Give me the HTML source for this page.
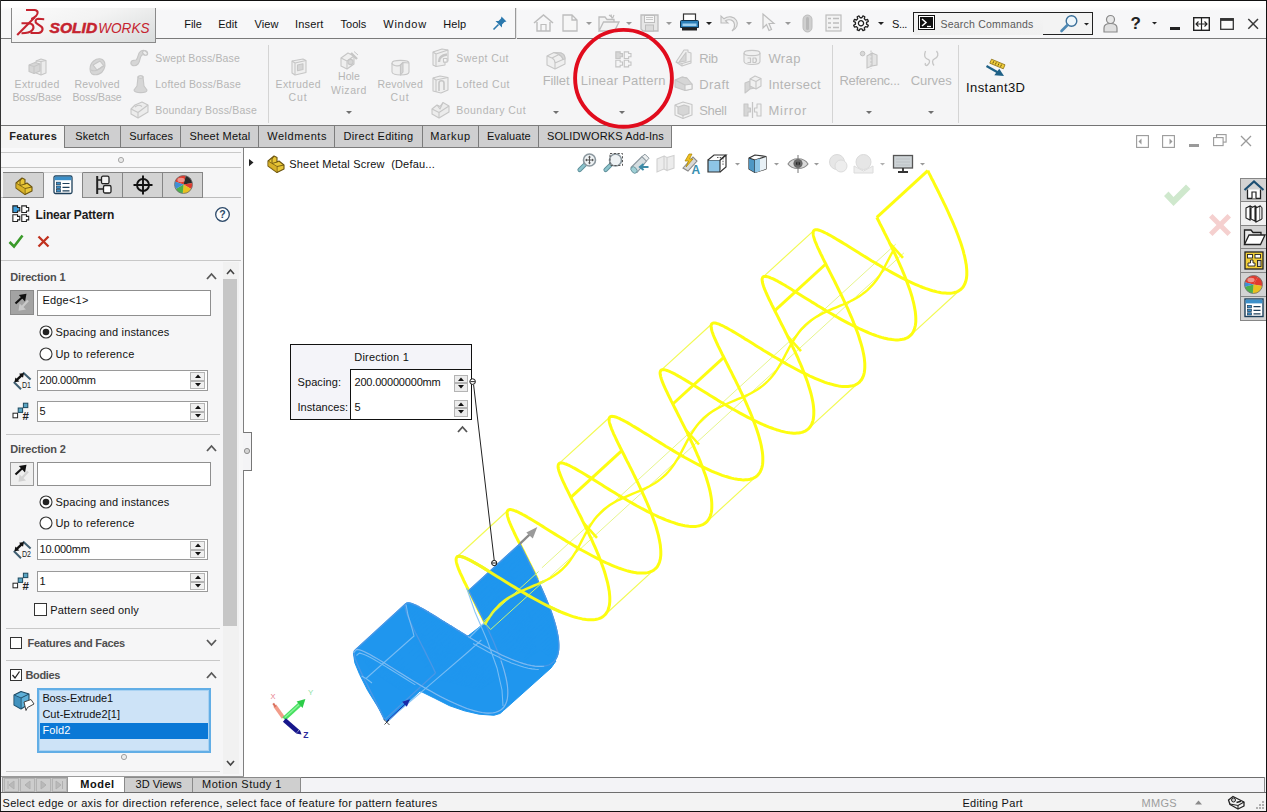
<!DOCTYPE html>
<html lang="en"><head><meta charset="utf-8"><title>SOLIDWORKS - Linear Pattern</title>
<style>
html,body{margin:0;padding:0;background:#fff;}
body{width:1267px;height:812px;position:relative;overflow:hidden;font-family:"Liberation Sans", sans-serif;font-size:12px;}
#app{position:absolute;left:0;top:0;width:1267px;height:812px;overflow:hidden;background:#fff;}
#app div,#app span,#app svg{position:absolute;box-sizing:border-box;}
#app span{white-space:pre;}
#app svg{overflow:visible;}
#app svg text{font-family:"Liberation Sans", sans-serif;}
</style></head><body><div id="app">
<div style="left:0px;top:0px;width:1267px;height:812px;background:#fff"></div>
<div style="left:0px;top:0px;width:1267px;height:39px;background:#f7f7f8"></div>
<div style="left:0px;top:0px;width:1267px;height:11px;background:linear-gradient(#fff 0,#fff 55%,#f7f7f8 100%)"></div>
<div style="left:0px;top:39px;width:1267px;height:87px;background:#f5f5f6"></div>
<div style="left:0px;top:38px;width:1267px;height:1px;background:#7a7a7a"></div>
<div style="left:0px;top:125px;width:1267px;height:1px;background:#747474"></div>
<div style="left:0px;top:126px;width:672px;height:22px;background:#f5f5f6"></div>
<div style="left:0px;top:147px;width:1267px;height:1px;background:#747474"></div>
<div style="left:671px;top:126px;width:600px;height:22px;background:#fff"></div>
<div style="left:671px;top:147px;width:600px;height:1px;background:#fff"></div>
<div style="left:11px;top:8px;width:145px;height:35px;background:linear-gradient(160deg,#fbfbfb 0%,#f3f3f3 45%,#d9dcdc 100%);border:1px solid #8a8a8a;border-top:none"></div>
<svg style="left:0px;top:0px;" width="160" height="46" viewBox="0 0 160 46">
<g fill="none" stroke="#c5232f" stroke-width="2.1" stroke-linecap="butt" stroke-linejoin="round">
<path d="M26,10 L34.5,10 C38.5,10.2 38.3,13.8 36,16 C34.5,17.5 33,18.6 31.2,19"/>
<path d="M34.5,17.5 L17.2,35"/>
<path d="M21.5,23.3 L28.5,23.3 C33.5,23.5 34.8,27.5 32,30.5 C29.5,33.2 26,33.2 21.5,33.2"/>
<path d="M44.2,19.2 L38.2,18.8 C35.2,19 34.6,22 37,23.6 L41.3,26.6 C43.6,28.6 42.6,32.6 38.5,33 L30.5,33"/>
</g>
<text x="49.6" y="32.9" font-size="14.2" font-weight="700" font-style="italic" fill="#c5232f" stroke="#c5232f" stroke-width=".5" textLength="47.6" lengthAdjust="spacingAndGlyphs">SOLID</text>
<text x="98.2" y="32.9" font-size="14.2" font-weight="400" font-style="italic" fill="#c5232f" textLength="51.4" lengthAdjust="spacingAndGlyphs">WORKS</text>
</svg>
<span style="left:184.3px;top:18.6px;font-size:11px;line-height:11px;font-weight:400;color:#111;letter-spacing:-0.06px">File</span>
<span style="left:218.2px;top:18.6px;font-size:11px;line-height:11px;font-weight:400;color:#111;letter-spacing:0.06px">Edit</span>
<span style="left:254.5px;top:18.6px;font-size:11px;line-height:11px;font-weight:400;color:#111;letter-spacing:0.09px">View</span>
<span style="left:295.0px;top:18.6px;font-size:11px;line-height:11px;font-weight:400;color:#111;letter-spacing:0.16px">Insert</span>
<span style="left:340.4px;top:18.6px;font-size:11px;line-height:11px;font-weight:400;color:#111;letter-spacing:0.06px">Tools</span>
<span style="left:383.3px;top:18.6px;font-size:11px;line-height:11px;font-weight:400;color:#111;letter-spacing:0.73px">Window</span>
<span style="left:443.2px;top:18.6px;font-size:11px;line-height:11px;font-weight:400;color:#111;letter-spacing:0.09px">Help</span>
<svg style="left:492px;top:15px;" width="16" height="16" viewBox="0 0 16 16"><path d="M9.5,1.5 L14.5,6.5 L12.5,7 L10,9.5 L10,12.5 L3.5,6 L6.5,6 L9,3.5 Z" fill="#2b78ad"/><path d="M6.5,9.5 L1.5,14.5" stroke="#2b78ad" stroke-width="1.6"/></svg>
<div style="left:515px;top:8px;width:1px;height:31px;background:#9a9a9a"></div>
<div style="left:516px;top:8px;width:1px;height:31px;background:#e4e4e4"></div>
<svg style="left:533px;top:14px;" width="21" height="18" viewBox="0 0 21 18"><path d="M1,9 L10.5,1 L20,9" fill="none" stroke="#bdbdbd" stroke-width="1.6"/><path d="M4,8 V17 H17 V8" fill="none" stroke="#bdbdbd" stroke-width="1.4"/><path d="M8,17 V10.5 H13 V17" fill="none" stroke="#bdbdbd" stroke-width="1.2"/></svg>
<svg style="left:562px;top:14px;" width="16" height="18" viewBox="0 0 16 18"><path d="M1,1 H10 L15,6 V17 H1 Z M10,1 V6 H15" fill="#f6f6f6" stroke="#bdbdbd" stroke-width="1.3"/></svg>
<svg style="left:585.5px;top:21.5px;" width="6" height="4" viewBox="0 0 6 4"><path d="M0,0 L6,0 L3,3 Z" fill="#9a9a9a"/></svg>
<svg style="left:598px;top:14px;" width="22" height="18" viewBox="0 0 22 18"><path d="M1,17 V3 H7 L9,5.5 H16 V8 M1,17 L5.5,8 H21 L16.5,17 Z" fill="#f3f3f3" stroke="#bdbdbd" stroke-width="1.3"/><path d="M11,1 L15,4 M13,0.5 L14,4.5 M16,1 L14.5,4.5" stroke="#bdbdbd" stroke-width="1.1"/></svg>
<svg style="left:625.5px;top:21.5px;" width="6" height="4" viewBox="0 0 6 4"><path d="M0,0 L6,0 L3,3 Z" fill="#9a9a9a"/></svg>
<svg style="left:640px;top:14px;" width="19" height="18" viewBox="0 0 19 18"><path d="M1,1 H18 V17 H3 L1,15 Z" fill="#e6e6e6" stroke="#bdbdbd" stroke-width="1.3"/><rect x="4.5" y="1.5" width="10" height="7" fill="#f6f6f6" stroke="#bdbdbd" stroke-width="1"/><rect x="5.5" y="11" width="8" height="6" fill="#dadada" stroke="#bdbdbd" stroke-width="1"/><path d="M6,3.5 H13 M6,5.5 H13" stroke="#bdbdbd" stroke-width=".8"/></svg>
<svg style="left:665.5px;top:21.5px;" width="6" height="4" viewBox="0 0 6 4"><path d="M0,0 L6,0 L3,3 Z" fill="#9a9a9a"/></svg>
<svg style="left:679px;top:13px;" width="21" height="19" viewBox="0 0 21 19"><rect x="4.5" y="1" width="12" height="8" fill="#fff" stroke="#333" stroke-width="1.2"/><path d="M1.5,8.5 Q1.5,7.5 2.5,7.5 H18.5 Q19.5,7.5 19.5,8.5 V14.5 H1.5 Z" fill="#2b7fb8" stroke="#12344d" stroke-width="1"/><rect x="3.5" y="10.5" width="14" height="2.6" fill="#9fd0ee"/><rect x="3" y="14.5" width="15" height="3" fill="#222"/></svg>
<svg style="left:705.5px;top:21.5px;" width="6" height="4" viewBox="0 0 6 4"><path d="M0,0 L6,0 L3,3 Z" fill="#222"/></svg>
<svg style="left:719px;top:14px;" width="20" height="18" viewBox="0 0 20 18"><path d="M2,2 V9 H9 L6.5,6.8 C10,4.5 15,6 15.5,10.5 C15.8,13 15,15 13,17 C18,14.5 19.5,10 17.5,6.5 C15,2.5 9.5,1.5 5,4.8 Z" fill="#ececec" stroke="#bdbdbd" stroke-width="1.1"/></svg>
<svg style="left:745.5px;top:21.5px;" width="6" height="4" viewBox="0 0 6 4"><path d="M0,0 L6,0 L3,3 Z" fill="#9a9a9a"/></svg>
<svg style="left:761px;top:13px;" width="16" height="20" viewBox="0 0 16 20"><path d="M2,1 L2,15 L5.5,11.5 L8,17.5 L10.5,16.5 L8,10.5 L13,10.5 Z" fill="#f4f4f4" stroke="#bdbdbd" stroke-width="1.2"/></svg>
<svg style="left:784.5px;top:21.5px;" width="6" height="4" viewBox="0 0 6 4"><path d="M0,0 L6,0 L3,3 Z" fill="#9a9a9a"/></svg>
<svg style="left:802px;top:14px;" width="11" height="19" viewBox="0 0 11 19"><rect x="1" y="1" width="9" height="17" rx="4.5" fill="#cfcfcf" stroke="#bdbdbd" stroke-width="1"/><rect x="4" y="3" width="3" height="13" rx="1.5" fill="#b8b8b8"/></svg>
<svg style="left:825px;top:14px;" width="17" height="18" viewBox="0 0 17 18"><rect x="1" y="1" width="15" height="16" fill="#f3f3f3" stroke="#bdbdbd" stroke-width="1.2"/><path d="M3,4.5 H6 M3,9 H6 M3,13.5 H6 M8,4.5 H14 M8,9 H14 M8,13.5 H14" stroke="#bdbdbd" stroke-width="1.3"/></svg>
<svg style="left:852px;top:14px;" width="18" height="18" viewBox="0 0 18 18"><g transform="translate(9,9.3) rotate(22.5)"><path d="M5.45,-1.31 L7.53,-1.01 L7.53,1.01 L5.45,1.31 L4.77,2.93 L6.04,4.61 L4.61,6.04 L2.93,4.77 L1.31,5.45 L1.01,7.53 L-1.01,7.53 L-1.31,5.45 L-2.93,4.77 L-4.61,6.04 L-6.04,4.61 L-4.77,2.93 L-5.45,1.31 L-7.53,1.01 L-7.53,-1.01 L-5.45,-1.31 L-4.77,-2.93 L-6.04,-4.61 L-4.61,-6.04 L-2.93,-4.77 L-1.31,-5.45 L-1.01,-7.53 L1.01,-7.53 L1.31,-5.45 L2.93,-4.77 L4.61,-6.04 L6.04,-4.61 L4.77,-2.93 Z" fill="#fcfcfc" stroke="#222" stroke-width="1.3" stroke-linejoin="round"/><circle r="2.6" fill="none" stroke="#222" stroke-width="1.3"/></g></svg>
<svg style="left:877.5px;top:21.5px;" width="6" height="4" viewBox="0 0 6 4"><path d="M0,0 L6,0 L3,3 Z" fill="#222"/></svg>
<span style="left:892.0px;top:18.6px;font-size:11px;line-height:11px;font-weight:400;color:#111;letter-spacing:-0.38px">S...</span>
<div style="left:913px;top:12px;width:180px;height:23px;background:#fff;border:1px solid #222;"></div>
<div style="left:913px;top:13px;width:130px;height:22px;background:linear-gradient(#f4f4f4,#f0f0f0);border:none"></div>
<div style="left:913px;top:12px;width:130px;height:1px;background:#222"></div>
<div style="left:913px;top:12px;width:1px;height:20px;background:#222"></div>
<div style="left:1043px;top:13px;width:49px;height:21px;background:#f3f3f3"></div>
<svg style="left:918px;top:15px;" width="17" height="15" viewBox="0 0 17 15"><rect x="0.5" y="0.5" width="16" height="14" fill="#fff" stroke="#111" stroke-width="1"/><rect x="2" y="2" width="13" height="11" fill="#111"/><path d="M4,4 L8,7.5 L4,11" fill="none" stroke="#fff" stroke-width="1.5"/><path d="M9,11.5 H13" stroke="#fff" stroke-width="1.3"/></svg>
<span style="left:940.5px;top:19.1px;font-size:10.5px;line-height:10.5px;font-weight:400;color:#5a5a5a;letter-spacing:0.21px">Search Commands</span>
<svg style="left:1060px;top:14px;" width="19" height="19" viewBox="0 0 19 19"><circle cx="11.5" cy="7" r="5.3" fill="#eef6fb" stroke="#3a6f99" stroke-width="1.4"/><path d="M7.5,11 L1.5,17" stroke="#4e88b3" stroke-width="2.6" stroke-linecap="round"/></svg>
<svg style="left:1083.5px;top:23.25px;" width="5.0" height="3.5" viewBox="0 0 5.0 3.5"><path d="M0,0 L5.0,0 L2.5,2.5 Z" fill="#222"/></svg>
<svg style="left:1103px;top:14px;" width="15" height="19" viewBox="0 0 15 19"><circle cx="7.5" cy="5.5" r="4" fill="#e8e8e8" stroke="#8a8a8a" stroke-width="1.2"/><path d="M1,18 V14 C1,10.5 4,9.5 7.5,9.5 C11,9.5 14,10.5 14,14 V18 Z" fill="#e0e0e0" stroke="#8a8a8a" stroke-width="1.2"/></svg>
<span style="left:1130.5px;top:15.2px;font-size:17px;line-height:17px;font-weight:700;color:#222;letter-spacing:-0.39px">?</span>
<svg style="left:1152.0px;top:21.75px;" width="5.0" height="3.5" viewBox="0 0 5.0 3.5"><path d="M0,0 L5.0,0 L2.5,2.5 Z" fill="#222"/></svg>
<div style="left:1170px;top:27px;width:10px;height:3px;background:#222"></div>
<svg style="left:1193px;top:17px;" width="17" height="14" viewBox="0 0 17 14"><rect x="0.7" y="0.7" width="15.6" height="12.6" fill="#fff" stroke="#222" stroke-width="1.4"/><path d="M8.5,1 V13" stroke="#222" stroke-width="1.2"/><path d="M3,7 H14 M5.5,4.5 L3,7 L5.5,9.5 M11.5,4.5 L14,7 L11.5,9.5" fill="none" stroke="#222" stroke-width="1.1"/></svg>
<svg style="left:1220px;top:18px;" width="14" height="12" viewBox="0 0 14 12"><rect x="0.7" y="0.7" width="12.6" height="10.6" fill="#fafafa" stroke="#333" stroke-width="1.3"/><rect x="0.7" y="0.7" width="12.6" height="2.2" fill="#333"/></svg>
<svg style="left:1247px;top:18px;" width="12" height="12" viewBox="0 0 12 12"><path d="M1.3,1 L11,10.8 M11,1 L1.3,10.8" stroke="#3a3a3a" stroke-width="1.5"/></svg>
<svg style="left:28px;top:57.5px;" width="19" height="18" viewBox="0 0 19 18"><g fill="#e3e3e3" stroke="#c6c6c6" stroke-width="1.1" stroke-linejoin="round"><path d="M8,3 L13,1 L18,2.5 V15 L13,17 L8,15 Z" fill="#ececec"/><path d="M13,3.5 V17 M8,3 L13,3.5 L18,2.5" fill="none"/><path d="M1,7 L7,4.5 L12,6 V13 L6,15.5 L1,13.5 Z" fill="#d6d6d6"/><path d="M1,7 L6,8.5 L12,6 M6,8.5 V15.5" fill="none"/></g></svg>
<span style="left:14.5px;top:79.1px;font-size:10.5px;line-height:10.5px;font-weight:400;color:#b5b5b5;letter-spacing:0.40px">Extruded</span>
<span style="left:12.5px;top:91.9px;font-size:10.5px;line-height:10.5px;font-weight:400;color:#b5b5b5;letter-spacing:-0.13px">Boss/Base</span>
<svg style="left:88px;top:56.5px;" width="19" height="20" viewBox="0 0 19 20"><g fill="#e3e3e3" stroke="#c6c6c6" stroke-width="1.1" stroke-linejoin="round"><path d="M2,12 C2,5 8,1 13,2 C17,3 18,8 16,12 C14,17 8,19 4,17 C2.5,16 2,14 2,12 Z" fill="#d6d6d6"/><path d="M5,8 L12,4 L16,9 L9,13 Z" fill="#efefef"/><path d="M3,13 C6,15 11,13 15,9" fill="none"/></g></svg>
<span style="left:74.5px;top:79.1px;font-size:10.5px;line-height:10.5px;font-weight:400;color:#b5b5b5;letter-spacing:0.19px">Revolved</span>
<span style="left:72.5px;top:91.9px;font-size:10.5px;line-height:10.5px;font-weight:400;color:#b5b5b5;letter-spacing:-0.13px">Boss/Base</span>
<svg style="left:129px;top:48.5px;" width="20" height="19" viewBox="0 0 20 19"><g fill="#e3e3e3" stroke="#c6c6c6" stroke-width="1.1" stroke-linejoin="round"><path d="M2,13 C1,17 6,18 9,15 C12,12 10,8 13,6 C15,5 17,7 18.5,5.5 C19.5,2 15,0.5 12,2 C8,4 10,9 7,11 C5,12 3,10.5 2,13 Z" fill="#d6d6d6"/><ellipse cx="16" cy="4" rx="2.6" ry="1.8" fill="#efefef" transform="rotate(35 16 4)"/></g></svg>
<span style="left:155.3px;top:53.4px;font-size:10.5px;line-height:10.5px;font-weight:400;color:#b5b5b5;letter-spacing:0.16px">Swept Boss/Base</span>
<svg style="left:132.5px;top:75px;" width="15" height="19" viewBox="0 0 15 19"><g fill="#e3e3e3" stroke="#c6c6c6" stroke-width="1.1" stroke-linejoin="round"><path d="M5,2 C5,0.5 10,0.5 10,2 L11,11 L14,15 C14,18.5 1,18.5 1,15 L4,11 Z" fill="#d6d6d6"/><ellipse cx="7.5" cy="2" rx="2.5" ry="1.1" fill="#f2f2f2"/></g></svg>
<span style="left:155.3px;top:79.1px;font-size:10.5px;line-height:10.5px;font-weight:400;color:#b5b5b5;letter-spacing:0.21px">Lofted Boss/Base</span>
<svg style="left:129.5px;top:100.7px;" width="19" height="18" viewBox="0 0 19 18"><g fill="#e3e3e3" stroke="#c6c6c6" stroke-width="1.1" stroke-linejoin="round"><path d="M1,8 L5,4 L12,1 L18,4 V11 L8,17 L1,13 Z" fill="#ececec"/><path d="M1,8 L8,11.5 L18,4 M8,11.5 V17" fill="none"/><path d="M5,6 C7,4 10,4 12,5.5" fill="none"/></g></svg>
<span style="left:155.3px;top:104.9px;font-size:10.5px;line-height:10.5px;font-weight:400;color:#b5b5b5;letter-spacing:0.20px">Boundary Boss/Base</span>
<div style="left:268px;top:45px;width:1px;height:78px;background:#d4d4d4"></div>
<svg style="left:290.5px;top:58px;" width="16" height="18" viewBox="0 0 16 18"><g fill="#e3e3e3" stroke="#c6c6c6" stroke-width="1.1" stroke-linejoin="round"><path d="M1,3 L12,1 L15,2.5 V14.5 L4,17 L1,15 Z" fill="#efefef"/><path d="M4,5 L15,2.5 M4,5 V17 M1,3 L4,5" fill="none"/><path d="M6.5,7 L12,5.8 V11.5 L6.5,12.8 Z" fill="#d6d6d6"/></g></svg>
<span style="left:275.5px;top:79.1px;font-size:10.5px;line-height:10.5px;font-weight:400;color:#b5b5b5;letter-spacing:0.43px">Extruded</span>
<span style="left:288.5px;top:91.9px;font-size:10.5px;line-height:10.5px;font-weight:400;color:#b5b5b5;letter-spacing:0.89px">Cut</span>
<svg style="left:339.5px;top:51px;" width="19" height="19" viewBox="0 0 19 19"><g fill="#e3e3e3" stroke="#c6c6c6" stroke-width="1.1" stroke-linejoin="round"><path d="M1,7 L8,2 L14,5 V13 L7,18 L1,15 Z" fill="#efefef"/><path d="M1,7 L7,10 L14,5 M7,10 V18" fill="none"/><circle cx="10.5" cy="11" r="2.6" fill="#d6d6d6"/><path d="M11,2 L17,8" stroke-width="2.4"/><path d="M14,0.5 L18,4" stroke-width="1"/></g></svg>
<span style="left:338.0px;top:71.4px;font-size:10.5px;line-height:10.5px;font-weight:400;color:#b5b5b5;letter-spacing:0.10px">Hole</span>
<span style="left:331.0px;top:84.9px;font-size:10.5px;line-height:10.5px;font-weight:400;color:#b5b5b5;letter-spacing:0.55px">Wizard</span>
<svg style="left:345.5px;top:110.8px;" width="6" height="4" viewBox="0 0 6 4"><path d="M0,0 L6,0 L3,3 Z" fill="#707070"/></svg>
<svg style="left:390.5px;top:57.5px;" width="19" height="19" viewBox="0 0 19 19"><g fill="#e3e3e3" stroke="#c6c6c6" stroke-width="1.1" stroke-linejoin="round"><path d="M1,5 C1,1.5 18,1.5 18,5 V14 C18,18 1,18 1,14 Z" fill="#efefef"/><path d="M1,5 C1,8 8,8.5 9.5,7 L12,4.5 M9.5,7 V17 M12,4.5 C15,4.8 18,5 18,5" fill="none"/><path d="M9.5,7 L12,4.5 V14 L9.5,17 Z" fill="#d6d6d6"/></g></svg>
<span style="left:377.5px;top:79.1px;font-size:10.5px;line-height:10.5px;font-weight:400;color:#b5b5b5;letter-spacing:0.21px">Revolved</span>
<span style="left:390.5px;top:91.9px;font-size:10.5px;line-height:10.5px;font-weight:400;color:#b5b5b5;letter-spacing:0.89px">Cut</span>
<svg style="left:431.5px;top:48.3px;" width="17" height="19" viewBox="0 0 17 19"><g fill="#e3e3e3" stroke="#c6c6c6" stroke-width="1.1" stroke-linejoin="round"><path d="M1,4 L10,1 L16,2 V13 L13,14 V17 L4,18.5 L1,17 Z" fill="#efefef"/><path d="M4,6 L16,2 M4,6 V18.5 M1,4 L4,6" fill="none"/><path d="M7,14 C7,9 10,7 15,6.5" fill="none" stroke-width="2.4"/><rect x="11.5" y="10.5" width="3.6" height="3.6" fill="#f6f6f6"/></g></svg>
<span style="left:456.3px;top:53.4px;font-size:10.5px;line-height:10.5px;font-weight:400;color:#b5b5b5;letter-spacing:0.47px">Swept Cut</span>
<svg style="left:431.5px;top:74.8px;" width="17" height="19" viewBox="0 0 17 19"><g fill="#e3e3e3" stroke="#c6c6c6" stroke-width="1.1" stroke-linejoin="round"><path d="M1,3 L8,1 L16,2.5 V15 L9,18 L1,16 Z" fill="#efefef"/><path d="M4,5 L16,2.5 M4,5 V17 M1,3 L4,5" fill="none"/><path d="M7,16 V8 C7,5 12,5 12,8 V15" fill="none" stroke-width="1.6"/></g></svg>
<span style="left:456.3px;top:79.1px;font-size:10.5px;line-height:10.5px;font-weight:400;color:#b5b5b5;letter-spacing:0.52px">Lofted Cut</span>
<svg style="left:430.5px;top:101px;" width="19" height="18" viewBox="0 0 19 18"><g fill="#e3e3e3" stroke="#c6c6c6" stroke-width="1.1" stroke-linejoin="round"><path d="M1,8 L6,4 L9,5.5 L12,1.5 L18,5 V11 L8,17 L1,13 Z" fill="#ececec"/><path d="M1,8 L8,11.5 L18,5 M8,11.5 V17 M6,4 L9,8 L12,1.5" fill="none"/></g></svg>
<span style="left:456.3px;top:104.9px;font-size:10.5px;line-height:10.5px;font-weight:400;color:#b5b5b5;letter-spacing:0.46px">Boundary Cut</span>
<svg style="left:546px;top:50.5px;" width="20" height="19" viewBox="0 0 20 19"><g fill="#e3e3e3" stroke="#c6c6c6" stroke-width="1.1" stroke-linejoin="round"><path d="M1,5 L8,1.5 L15,2 C18,3 19,5 19,8 V13 L9,18 L1,14 Z" fill="#efefef"/><path d="M1,5 L6,7 C8,8 9,9.5 9,12 V18 M6,7 L13,3.5 C15,4.5 16.5,6 17,8.5 L9,12" fill="none"/><path d="M8,1.5 L15,2 C18,3 19,5 19,8 L17,8.5 C16.5,6 15,4.5 13,3.5 Z" fill="#d6d6d6"/></g></svg>
<span style="left:542.7px;top:73.9px;font-size:13px;line-height:13px;font-weight:400;color:#b5b5b5;letter-spacing:-0.11px">Fillet</span>
<svg style="left:552.5px;top:110.8px;" width="6" height="4" viewBox="0 0 6 4"><path d="M0,0 L6,0 L3,3 Z" fill="#707070"/></svg>
<svg style="left:615px;top:51px;" width="16.5" height="16.5" viewBox="0 0 16.5 16.5"><path d="M0.83,0.83 h4.33 v1.65 h2.37 v3.30 h-2.37 v1.65 h-4.33 Z" fill="#d6d6d6" stroke="#c4c4c4" stroke-width="1.1"/><path d="M9.28,0.83 h4.33 v1.65 h2.37 v3.30 h-2.37 v1.65 h-4.33 Z" fill="none" stroke="#c4c4c4" stroke-width="1.1"/><path d="M0.83,9.28 h4.33 v1.65 h2.37 v3.30 h-2.37 v1.65 h-4.33 Z" fill="none" stroke="#c4c4c4" stroke-width="1.1"/><path d="M9.28,9.28 h4.33 v1.65 h2.37 v3.30 h-2.37 v1.65 h-4.33 Z" fill="none" stroke="#c4c4c4" stroke-width="1.1"/></svg>
<span style="left:580.8px;top:73.9px;font-size:13px;line-height:13px;font-weight:400;color:#b5b5b5;letter-spacing:0.23px">Linear Pattern</span>
<svg style="left:619.3px;top:110.8px;" width="6" height="4" viewBox="0 0 6 4"><path d="M0,0 L6,0 L3,3 Z" fill="#707070"/></svg>
<svg style="left:675px;top:49px;" width="17" height="18" viewBox="0 0 17 18"><g fill="#e3e3e3" stroke="#c6c6c6" stroke-width="1.1" stroke-linejoin="round"><path d="M1,13 L9,1 L13,1 L13,3 L16,4 V14 L7,17 Z" fill="#efefef"/><path d="M4,13 L11,3.5 V12 Z" fill="#d6d6d6"/><path d="M1,13 L7,14.5 L16,12 M7,14.5 V17" fill="none"/></g></svg>
<span style="left:699.2px;top:52.1px;font-size:13px;line-height:13px;font-weight:400;color:#b5b5b5;letter-spacing:-0.34px">Rib</span>
<svg style="left:674px;top:76px;" width="19" height="15" viewBox="0 0 19 15"><g fill="#e3e3e3" stroke="#c6c6c6" stroke-width="1.1" stroke-linejoin="round"><path d="M1,4 L8,1 L13,2 L18,8 V13 L11,14.5 L1,11 Z" fill="#d6d6d6"/><path d="M11,9 L18,8 V13 L11,14.5 Z" fill="#f4f4f4"/><path d="M1,4 L11,9 M8,1 L13,2" fill="none"/></g></svg>
<span style="left:699.2px;top:77.8px;font-size:13px;line-height:13px;font-weight:400;color:#b5b5b5;letter-spacing:0.43px">Draft</span>
<svg style="left:674px;top:101px;" width="19" height="18" viewBox="0 0 19 18"><g fill="#e3e3e3" stroke="#c6c6c6" stroke-width="1.1" stroke-linejoin="round"><path d="M1,4 L9,1 L18,3.5 V14 L9,17.5 L1,14 Z" fill="#f2f2f2"/><path d="M4,6 L10,4 L15,5.5 V12.5 L9,14.5 L4,12.5 Z" fill="#d6d6d6"/><path d="M1,4 L4,6 M9,17.5 V14.5" fill="none"/></g></svg>
<span style="left:699.2px;top:103.6px;font-size:13px;line-height:13px;font-weight:400;color:#b5b5b5;letter-spacing:-0.32px">Shell</span>
<svg style="left:743px;top:49px;" width="18" height="17" viewBox="0 0 18 17"><g fill="#e3e3e3" stroke="#c6c6c6" stroke-width="1.1" stroke-linejoin="round"><path d="M1,4 C1,0.5 17,0.5 17,4 V12.5 C17,16.5 1,16.5 1,12.5 Z" fill="#f0f0f0"/><path d="M1,4 C1,7.5 17,7.5 17,4" fill="none"/><path d="M4.5,9 h3 v4.5 h-3 M10,9 h2.5 q2,2.2 0,4.5 h-2.5 Z" fill="none" stroke-width="1.2"/></g></svg>
<span style="left:768.4px;top:52.1px;font-size:13px;line-height:13px;font-weight:400;color:#b5b5b5;letter-spacing:0.39px">Wrap</span>
<svg style="left:743.5px;top:74.5px;" width="18" height="19" viewBox="0 0 18 19"><g fill="#e3e3e3" stroke="#c6c6c6" stroke-width="1.1" stroke-linejoin="round"><path d="M1,8 L6,6 V14 L1,18 Z M6,6 L11,8 V13 L6,14" fill="#d6d6d6"/><path d="M6,4 L11,1 L17,3.5 V11 L12,14 L6,11 Z" fill="#f0f0f0"/><path d="M6,4 L12,6.5 L17,3.5 M12,6.5 V14" fill="none"/></g></svg>
<span style="left:768.4px;top:77.8px;font-size:13px;line-height:13px;font-weight:400;color:#b5b5b5;letter-spacing:0.30px">Intersect</span>
<svg style="left:742.5px;top:102px;" width="19" height="16" viewBox="0 0 19 16"><g fill="#e3e3e3" stroke="#c6c6c6" stroke-width="1.1" stroke-linejoin="round"><path d="M1,2 H5 V6 H7.5 V10 H5 V14 H1 Z" fill="#d6d6d6"/><path d="M9.5,0 V16" fill="none" stroke-width="1.3"/><path d="M18,2 H14 V6 H11.5 V10 H14 V14 H18 Z" fill="#f2f2f2"/></g></svg>
<span style="left:768.4px;top:103.6px;font-size:13px;line-height:13px;font-weight:400;color:#b5b5b5;letter-spacing:0.78px">Mirror</span>
<div style="left:832px;top:45px;width:1px;height:78px;background:#d4d4d4"></div>
<svg style="left:859px;top:50px;" width="21" height="19" viewBox="0 0 21 19"><circle cx="3.6" cy="3.6" r="2.3" fill="#d8d8d8" stroke="#c2c2c2"/><path d="M8,6 L13,3 V16 L8,18 Z M13,3 L18,5 V15 L13,16" fill="#e4e4e4" stroke="#c4c4c4" stroke-width="1.1"/><path d="M12,0.5 V18.5" stroke="#c4c4c4" stroke-width="1" stroke-dasharray="2,1.5"/></svg>
<span style="left:839.4px;top:73.9px;font-size:13px;line-height:13px;font-weight:400;color:#b5b5b5;letter-spacing:-0.29px">Referenc...</span>
<svg style="left:866px;top:110.8px;" width="6" height="4" viewBox="0 0 6 4"><path d="M0,0 L6,0 L3,3 Z" fill="#707070"/></svg>
<svg style="left:921px;top:50px;" width="20" height="19" viewBox="0 0 20 19"><path d="M4.5,1 C3,5 3.5,8 6,8.8 C9,9.5 9.5,12 7,14.5 C5,16.5 3.5,15 4.5,13 M15.5,1 C18,4 17,7.5 13.5,8.8 C11,9.8 11,13 13,15.5" fill="none" stroke="#c6c6c6" stroke-width="1.3"/></svg>
<span style="left:910.7px;top:73.9px;font-size:13px;line-height:13px;font-weight:400;color:#b5b5b5;letter-spacing:-0.01px">Curves</span>
<svg style="left:927.5px;top:110.8px;" width="6" height="4" viewBox="0 0 6 4"><path d="M0,0 L6,0 L3,3 Z" fill="#707070"/></svg>
<div style="left:958px;top:45px;width:1px;height:78px;background:#d4d4d4"></div>
<svg style="left:985px;top:58px;" width="21" height="19" viewBox="0 0 21 19"><path d="M6.5,1.2 L20,6.8 L18.3,10.8 L4.8,5.2 Z" fill="#f0cd3c" stroke="#8a6d10" stroke-width=".8"/><path d="M8.7,3.3 l-.9,2.1 M11.3,4.4 l-.9,2.1 M13.9,5.5 l-.9,2.1 M16.5,6.6 l-.9,2.1" stroke="#5a4708" stroke-width=".9"/><path d="M1.5,8 L12.5,14.3" stroke="#1f6187" stroke-width="2.3"/><path d="M19,18 L9.3,17.2 L14.3,10.8 Z" fill="#1f6187"/></svg>
<span style="left:966.0px;top:80.8px;font-size:13px;line-height:13px;font-weight:400;color:#111;letter-spacing:0.42px">Instant3D</span>
<div style="left:1px;top:126px;width:63.5px;height:22px;background:#f4f4f4;border-right:1px solid #8a8a8a"></div>
<span style="left:9.3px;top:131.4px;font-size:11px;line-height:11px;font-weight:700;color:#222;letter-spacing:0.23px">Features</span>
<div style="left:64px;top:125px;width:57px;height:23px;background:#cfcfd0;border:1px solid #7c7c7c"></div>
<span style="left:75.3px;top:131.4px;font-size:11px;line-height:11px;font-weight:400;color:#111;letter-spacing:0.11px">Sketch</span>
<div style="left:120px;top:125px;width:61px;height:23px;background:#cfcfd0;border:1px solid #7c7c7c"></div>
<span style="left:129.3px;top:131.4px;font-size:11px;line-height:11px;font-weight:400;color:#111;letter-spacing:0.03px">Surfaces</span>
<div style="left:180px;top:125px;width:79px;height:23px;background:#cfcfd0;border:1px solid #7c7c7c"></div>
<span style="left:189.4px;top:131.4px;font-size:11px;line-height:11px;font-weight:400;color:#111;letter-spacing:0.22px">Sheet Metal</span>
<div style="left:258px;top:125px;width:77px;height:23px;background:#cfcfd0;border:1px solid #7c7c7c"></div>
<span style="left:267.2px;top:131.4px;font-size:11px;line-height:11px;font-weight:400;color:#111;letter-spacing:0.55px">Weldments</span>
<div style="left:334px;top:125px;width:89px;height:23px;background:#cfcfd0;border:1px solid #7c7c7c"></div>
<span style="left:343.4px;top:131.4px;font-size:11px;line-height:11px;font-weight:400;color:#111;letter-spacing:0.33px">Direct Editing</span>
<div style="left:422px;top:125px;width:57px;height:23px;background:#cfcfd0;border:1px solid #7c7c7c"></div>
<span style="left:430.3px;top:131.4px;font-size:11px;line-height:11px;font-weight:400;color:#111;letter-spacing:0.62px">Markup</span>
<div style="left:478px;top:125px;width:61px;height:23px;background:#cfcfd0;border:1px solid #7c7c7c"></div>
<span style="left:487.1px;top:131.4px;font-size:11px;line-height:11px;font-weight:400;color:#111;letter-spacing:0.11px">Evaluate</span>
<div style="left:538px;top:125px;width:134px;height:23px;background:#cfcfd0;border:1px solid #7c7c7c"></div>
<span style="left:547.0px;top:131.4px;font-size:11px;line-height:11px;font-weight:400;color:#111;letter-spacing:0.11px">SOLIDWORKS Add-Ins</span>
<div style="left:1px;top:148px;width:243px;height:629px;background:#f6f6f7"></div>
<div style="left:1px;top:148px;width:240px;height:4px;background:#f9f9fa"></div>
<div style="left:1px;top:152px;width:240px;height:1px;background:#c9c9c9"></div>
<div style="left:1px;top:153px;width:240px;height:14px;background:#f8f8f9"></div>
<div style="left:1px;top:167px;width:240px;height:1px;background:#c4c4c4"></div>
<svg style="left:117px;top:156px;" width="8" height="8" viewBox="0 0 8 8"><circle cx="4" cy="4" r="2.6" fill="#e8e8e8" stroke="#a8a8a8" stroke-width="1"/></svg>
<div style="left:243px;top:148px;width:1px;height:629px;background:#7f7f7f"></div>
<div style="left:244px;top:432px;width:8px;height:39px;background:#f4f4f6;border:1px solid #777;border-left:none"></div>
<div style="left:243px;top:433px;width:1px;height:37px;background:#f4f4f6"></div>
<svg style="left:243px;top:447px;" width="8" height="8" viewBox="0 0 8 8"><circle cx="4" cy="4" r="2.6" fill="#d4d4d4" stroke="#909090" stroke-width="1"/></svg>
<div style="left:3px;top:172px;width:200px;height:26px;background:#d3d3d3;border-top:1px solid #858585;border-bottom:1px solid #8a8a8a"></div>
<div style="left:43px;top:172px;width:1px;height:26px;background:#858585"></div>
<div style="left:122px;top:172px;width:1px;height:26px;background:#858585"></div>
<div style="left:162px;top:172px;width:1px;height:26px;background:#858585"></div>
<div style="left:202px;top:172px;width:1px;height:26px;background:#858585"></div>
<div style="left:43px;top:172px;width:40px;height:26px;background:#f6f6f7;border-top:1px solid #cfcfcf;border-left:1px solid #8f8f8f;border-right:1px solid #858585"></div>
<div style="left:203px;top:197px;width:38px;height:1px;background:#bdbdbd"></div>
<div style="left:1px;top:197px;width:2px;height:1px;background:#bdbdbd"></div>
<svg style="left:14px;top:176px;" width="20" height="19" viewBox="0 0 20 19"><path d="M2,7 L8,2 L11,3.5 L11,8 L13,7 L18,11 L18,15 L11,18.5 L2,12 Z" fill="#e8c637" stroke="#6b5410" stroke-width="1.1" stroke-linejoin="round"/><path d="M2,7 L6,9.5 L6,5 M6,9.5 L11,12.5 L18,11 M11,12.5 V18.5 M6,5 L8,2 M6,9.5 L11,8" fill="none" stroke="#6b5410" stroke-width=".9"/><path d="M2,7 L6,9.5 L11,12.5 L11,18.5 L2,12 Z" fill="#caa21f" opacity=".55"/></svg>
<svg style="left:53px;top:175px;" width="20" height="20" viewBox="0 0 20 20"><rect x="1" y="1" width="18" height="17.5" rx="1.5" fill="#fff" stroke="#1d3f5a" stroke-width="1.3"/><rect x="1.6" y="1.6" width="16.8" height="3.6" fill="#3b8fc9"/><rect x="3.5" y="7.2" width="4" height="2.5" fill="#3b8fc9" stroke="#1d3f5a" stroke-width=".7"/><rect x="3.5" y="11" width="4" height="2.5" fill="#3b8fc9" stroke="#1d3f5a" stroke-width=".7"/><rect x="3.5" y="14.6" width="4" height="2.3" fill="#3b8fc9" stroke="#1d3f5a" stroke-width=".7"/><path d="M9.5,8.5 H16.5 M9.5,12.3 H16.5 M9.5,15.8 H16.5" stroke="#1d3f5a" stroke-width="1.2"/></svg>
<svg style="left:95px;top:175px;" width="18" height="20" viewBox="0 0 18 20"><path d="M2.2,1 V19" stroke="#222" stroke-width="2"/><path d="M2.2,5 H7 M2.2,14 H9" stroke="#222" stroke-width="1.5"/><rect x="6.5" y="1.2" width="7.5" height="7.5" rx="1.5" fill="#f2f2f2" stroke="#222" stroke-width="1.3"/><rect x="8.5" y="10.5" width="7.5" height="7.5" rx="1.5" fill="#fff" stroke="#222" stroke-width="1.3"/></svg>
<svg style="left:133px;top:175px;" width="20" height="20" viewBox="0 0 20 20"><circle cx="10" cy="10" r="6" fill="none" stroke="#111" stroke-width="1.9"/><path d="M10,0.5 V19.5 M0.5,10 H19.5" stroke="#111" stroke-width="1.9"/></svg>
<svg style="left:173px;top:174px;" width="21" height="21" viewBox="0 0 21 21"><path d="M10.5,10.5 L2.04,7.42 A9,9 0 0 1 12.83,1.81 Z" fill="#e23b2e"/><path d="M10.5,10.5 L12.83,1.81 A9,9 0 0 1 19.36,8.94 Z" fill="#2a2a2a"/><path d="M10.5,10.5 L19.36,8.94 A9,9 0 0 1 18.29,15.00 Z" fill="#e23b2e"/><path d="M10.5,10.5 L18.29,15.00 A9,9 0 0 1 9.72,19.47 Z" fill="#e8c020"/><path d="M10.5,10.5 L9.72,19.47 A9,9 0 0 1 2.71,15.00 Z" fill="#4cb04a"/><path d="M10.5,10.5 L2.71,15.00 A9,9 0 0 1 2.04,7.42 Z" fill="#3f8fd6"/><circle cx="10.5" cy="10.5" r="9" fill="none" stroke="#6e6e6e" stroke-width=".8"/><ellipse cx="8.0" cy="6.0" rx="3.6" ry="2.2" fill="#fff" opacity=".45"/></svg>
<svg style="left:12px;top:205px;" width="17" height="17" viewBox="0 0 17 17"><path d="M0.85,0.85 h4.68 v1.59 h2.23 v3.51 h-2.23 v1.59 h-4.68 Z" fill="#3b9bd8" stroke="#222" stroke-width="1.1"/><path d="M9.77,0.85 h4.68 v1.59 h2.23 v3.51 h-2.23 v1.59 h-4.68 Z" fill="#fff" stroke="#222" stroke-width="1.1"/><path d="M0.85,9.77 h4.68 v1.59 h2.23 v3.51 h-2.23 v1.59 h-4.68 Z" fill="#fff" stroke="#222" stroke-width="1.1"/><path d="M9.77,9.77 h4.68 v1.59 h2.23 v3.51 h-2.23 v1.59 h-4.68 Z" fill="#fff" stroke="#222" stroke-width="1.1"/></svg>
<span style="left:35.5px;top:208.8px;font-size:12px;line-height:12px;font-weight:700;color:#1c1c1c;letter-spacing:-0.14px">Linear Pattern</span>
<svg style="left:214px;top:206px;" width="17" height="17" viewBox="0 0 17 17"><circle cx="8.5" cy="8.5" r="6.8" fill="#fdfdfd" stroke="#2d4a6a" stroke-width="1.3"/><text x="8.5" y="12.4" text-anchor="middle" font-size="10.5" font-weight="700" fill="#2d4a6a">?</text></svg>
<svg style="left:8px;top:234px;" width="16" height="14" viewBox="0 0 16 14"><path d="M1.5,8 L6,12.5 L14.5,1.5" fill="none" stroke="#3a9a2a" stroke-width="2.6"/></svg>
<svg style="left:37px;top:235px;" width="13" height="13" viewBox="0 0 13 13"><path d="M1.5,1.5 L11.5,11.5 M11.5,1.5 L1.5,11.5" stroke="#c0311e" stroke-width="2.3"/></svg>
<div style="left:1px;top:260px;width:240px;height:1px;background:#c8c8c8"></div>
<div style="left:223px;top:262px;width:16px;height:512px;background:#f1f1f1"></div>
<div style="left:223px;top:279px;width:14px;height:347px;background:#c6c6c6"></div>
<svg style="left:226.0px;top:269.0px;" width="9" height="6" viewBox="0 0 9 6"><path d="M1,5 L4.5,1 L8,5" fill="none" stroke="#444" stroke-width="1.6"/></svg>
<svg style="left:226.0px;top:760.0px;" width="9" height="6" viewBox="0 0 9 6"><path d="M1,1 L4.5,5 L8,1" fill="none" stroke="#444" stroke-width="1.6"/></svg>
<span style="left:10.3px;top:272.0px;font-size:11px;line-height:11px;font-weight:700;color:#4f4f4f;letter-spacing:-0.15px">Direction 1</span>
<svg style="left:205.5px;top:273.0px;" width="11" height="7" viewBox="0 0 11 7"><path d="M1,6 L5.5,1 L10,6" fill="none" stroke="#5a5a5a" stroke-width="1.8"/></svg>
<div style="left:10px;top:290px;width:24px;height:25px;background:#a3a3a3;border:1px solid #8a8a8a"></div>
<svg style="left:12px;top:292px;" width="21" height="21" viewBox="0 0 21 21"><path d="M3.5,11.5 L10.5,5" fill="none" stroke="#111" stroke-width="2.2"/><path d="M14.5,1.8 L6.8,3 L13,9.6 Z" fill="#111"/><path d="M16,8.5 L10,15" fill="none" stroke="#c9c9c9" stroke-width="2.2"/><path d="M6.5,18.8 L7.6,11.4 L14,17.6 Z" fill="#c9c9c9"/></svg>
<div style="left:37px;top:290px;width:174px;height:26px;background:#fff;border:1px solid #8f8f8f"></div>
<span style="left:42.4px;top:295.1px;font-size:11px;line-height:11px;font-weight:400;color:#111;letter-spacing:0.22px">Edge&lt;1&gt;</span>
<svg style="left:38.5px;top:325px;" width="14" height="14" viewBox="0 0 14 14"><circle cx="7" cy="7" r="6" fill="#fff" stroke="#333" stroke-width="1.1"/><circle cx="7" cy="7" r="3.3" fill="#222"/></svg>
<span style="left:55.4px;top:326.6px;font-size:11px;line-height:11px;font-weight:400;color:#111;letter-spacing:0.16px">Spacing and instances</span>
<svg style="left:38.5px;top:346.5px;" width="14" height="14" viewBox="0 0 14 14"><circle cx="7" cy="7" r="6" fill="#fff" stroke="#333" stroke-width="1.1"/></svg>
<span style="left:55.4px;top:348.6px;font-size:11px;line-height:11px;font-weight:400;color:#111;letter-spacing:0.22px">Up to reference</span>
<svg style="left:12px;top:370px;" width="22" height="21" viewBox="0 0 22 21"><path d="M11,2.4 L18.6,9.6 M1.8,12 L9,19.2" fill="none" stroke="#3f5f72" stroke-width="2"/><path d="M4.6,10.2 L9.8,5.2" stroke="#111" stroke-width="2.4"/><path d="M2.4,12.2 L3.4,7.6 L7.4,11.6 Z M12,3 L11,7.8 L7,3.8 Z" fill="#111"/><text x="10" y="18.2" font-size="8.2" fill="#222" textLength="9" lengthAdjust="spacingAndGlyphs">D1</text></svg>
<div style="left:37px;top:370px;width:171px;height:21px;background:#fff;border:1px solid #9a9a9a"></div>
<span style="left:39.6px;top:374.9px;font-size:11px;line-height:11px;font-weight:400;color:#111;letter-spacing:-0.22px">200.000mm</span>
<div style="left:190px;top:372px;width:15px;height:8.5px;background:#f0f0f0;border:1px solid #b4b4b4"></div>
<div style="left:190px;top:380.5px;width:15px;height:8.5px;background:#f0f0f0;border:1px solid #b4b4b4"></div>
<svg style="left:194.5px;top:374px;" width="6" height="4" viewBox="0 0 6 4"><path d="M0,4 L3,0.5 L6,4 Z" fill="#111"/></svg>
<svg style="left:194.5px;top:383px;" width="6" height="4" viewBox="0 0 6 4"><path d="M0,0 L6,0 L3,3.5 Z" fill="#111"/></svg>
<svg style="left:12px;top:401px;" width="22" height="21" viewBox="0 0 22 21"><rect x="11.4" y="2.2" width="4.4" height="4.4" fill="#5aa6c4" stroke="#1e4a60" stroke-width="1"/><rect x="6.2" y="7" width="4.4" height="4.4" fill="#5aa6c4" stroke="#1e4a60" stroke-width="1"/><rect x="1" y="12.2" width="4.6" height="4.6" fill="#fff" stroke="#222" stroke-width="1"/><text x="10.6" y="19.2" font-size="11.5" font-weight="700" fill="#222">#</text></svg>
<div style="left:37px;top:401px;width:171px;height:21px;background:#fff;border:1px solid #9a9a9a"></div>
<span style="left:39.6px;top:405.9px;font-size:11px;line-height:11px;font-weight:400;color:#111;letter-spacing:-0.23px">5</span>
<div style="left:190px;top:403px;width:15px;height:8.5px;background:#f0f0f0;border:1px solid #b4b4b4"></div>
<div style="left:190px;top:411.5px;width:15px;height:8.5px;background:#f0f0f0;border:1px solid #b4b4b4"></div>
<svg style="left:194.5px;top:405px;" width="6" height="4" viewBox="0 0 6 4"><path d="M0,4 L3,0.5 L6,4 Z" fill="#111"/></svg>
<svg style="left:194.5px;top:414px;" width="6" height="4" viewBox="0 0 6 4"><path d="M0,0 L6,0 L3,3.5 Z" fill="#111"/></svg>
<div style="left:6px;top:434px;width:214px;height:1px;background:#c8c8c8"></div>
<span style="left:10.3px;top:443.8px;font-size:11px;line-height:11px;font-weight:700;color:#4f4f4f;letter-spacing:-0.12px">Direction 2</span>
<svg style="left:205.5px;top:445.0px;" width="11" height="7" viewBox="0 0 11 7"><path d="M1,6 L5.5,1 L10,6" fill="none" stroke="#5a5a5a" stroke-width="1.8"/></svg>
<div style="left:10px;top:462px;width:24px;height:24px;background:#efefef;border:1px solid #9a9a9a"></div>
<svg style="left:12px;top:463px;" width="21" height="21" viewBox="0 0 21 21"><path d="M3.5,11.5 L10.5,5" fill="none" stroke="#111" stroke-width="2.2"/><path d="M14.5,1.8 L6.8,3 L13,9.6 Z" fill="#111"/><path d="M16,8.5 L10,15" fill="none" stroke="#d2d2d2" stroke-width="2.2"/><path d="M6.5,18.8 L7.6,11.4 L14,17.6 Z" fill="#d2d2d2"/></svg>
<div style="left:37px;top:462px;width:174px;height:24px;background:#fff;border:1px solid #8f8f8f"></div>
<svg style="left:38.5px;top:495px;" width="14" height="14" viewBox="0 0 14 14"><circle cx="7" cy="7" r="6" fill="#fff" stroke="#333" stroke-width="1.1"/><circle cx="7" cy="7" r="3.3" fill="#222"/></svg>
<span style="left:55.4px;top:496.6px;font-size:11px;line-height:11px;font-weight:400;color:#111;letter-spacing:0.16px">Spacing and instances</span>
<svg style="left:38.5px;top:516px;" width="14" height="14" viewBox="0 0 14 14"><circle cx="7" cy="7" r="6" fill="#fff" stroke="#333" stroke-width="1.1"/></svg>
<span style="left:55.4px;top:517.6px;font-size:11px;line-height:11px;font-weight:400;color:#111;letter-spacing:0.22px">Up to reference</span>
<svg style="left:12px;top:539px;" width="22" height="21" viewBox="0 0 22 21"><path d="M11,2.4 L18.6,9.6 M1.8,12 L9,19.2" fill="none" stroke="#3f5f72" stroke-width="2"/><path d="M4.6,10.2 L9.8,5.2" stroke="#111" stroke-width="2.4"/><path d="M2.4,12.2 L3.4,7.6 L7.4,11.6 Z M12,3 L11,7.8 L7,3.8 Z" fill="#111"/><text x="10" y="18.2" font-size="8.2" fill="#222" textLength="9" lengthAdjust="spacingAndGlyphs">D2</text></svg>
<div style="left:37px;top:539px;width:171px;height:21px;background:#fff;border:1px solid #9a9a9a"></div>
<span style="left:39.6px;top:543.9px;font-size:11px;line-height:11px;font-weight:400;color:#111;letter-spacing:-0.25px">10.000mm</span>
<div style="left:190px;top:541px;width:15px;height:8.5px;background:#f0f0f0;border:1px solid #b4b4b4"></div>
<div style="left:190px;top:549.5px;width:15px;height:8.5px;background:#f0f0f0;border:1px solid #b4b4b4"></div>
<svg style="left:194.5px;top:543px;" width="6" height="4" viewBox="0 0 6 4"><path d="M0,4 L3,0.5 L6,4 Z" fill="#111"/></svg>
<svg style="left:194.5px;top:552px;" width="6" height="4" viewBox="0 0 6 4"><path d="M0,0 L6,0 L3,3.5 Z" fill="#111"/></svg>
<svg style="left:12px;top:571px;" width="22" height="21" viewBox="0 0 22 21"><rect x="11.4" y="2.2" width="4.4" height="4.4" fill="#5aa6c4" stroke="#1e4a60" stroke-width="1"/><rect x="6.2" y="7" width="4.4" height="4.4" fill="#5aa6c4" stroke="#1e4a60" stroke-width="1"/><rect x="1" y="12.2" width="4.6" height="4.6" fill="#fff" stroke="#222" stroke-width="1"/><text x="10.6" y="19.2" font-size="11.5" font-weight="700" fill="#222">#</text></svg>
<div style="left:37px;top:571px;width:171px;height:21px;background:#fff;border:1px solid #9a9a9a"></div>
<span style="left:39.6px;top:575.9px;font-size:11px;line-height:11px;font-weight:400;color:#111;letter-spacing:-1.23px">1</span>
<div style="left:190px;top:573px;width:15px;height:8.5px;background:#f0f0f0;border:1px solid #b4b4b4"></div>
<div style="left:190px;top:581.5px;width:15px;height:8.5px;background:#f0f0f0;border:1px solid #b4b4b4"></div>
<svg style="left:194.5px;top:575px;" width="6" height="4" viewBox="0 0 6 4"><path d="M0,4 L3,0.5 L6,4 Z" fill="#111"/></svg>
<svg style="left:194.5px;top:584px;" width="6" height="4" viewBox="0 0 6 4"><path d="M0,0 L6,0 L3,3.5 Z" fill="#111"/></svg>
<div style="left:34px;top:603px;width:13px;height:13px;background:#fff;border:1px solid #333"></div>
<span style="left:50.3px;top:604.6px;font-size:11px;line-height:11px;font-weight:400;color:#111;letter-spacing:0.18px">Pattern seed only</span>
<div style="left:6px;top:628px;width:214px;height:1px;background:#c8c8c8"></div>
<div style="left:10px;top:637px;width:12px;height:12px;background:#fff;border:1px solid #333"></div>
<span style="left:27.6px;top:637.6px;font-size:11px;line-height:11px;font-weight:700;color:#4f4f4f;letter-spacing:-0.30px">Features and Faces</span>
<svg style="left:205.5px;top:639.0px;" width="11" height="7" viewBox="0 0 11 7"><path d="M1,1 L5.5,6 L10,1" fill="none" stroke="#5a5a5a" stroke-width="1.8"/></svg>
<div style="left:6px;top:660px;width:214px;height:1px;background:#c8c8c8"></div>
<div style="left:10px;top:669px;width:12px;height:12px;background:#fff;border:1px solid #333"></div>
<svg style="left:11px;top:670px;" width="10" height="10" viewBox="0 0 10 10"><path d="M1.5,5 L4,8 L8.5,1.5" fill="none" stroke="#222" stroke-width="1.3"/></svg>
<span style="left:25.5px;top:669.6px;font-size:11px;line-height:11px;font-weight:700;color:#4f4f4f;letter-spacing:-0.36px">Bodies</span>
<svg style="left:205.5px;top:671.5px;" width="11" height="7" viewBox="0 0 11 7"><path d="M1,6 L5.5,1 L10,6" fill="none" stroke="#5a5a5a" stroke-width="1.8"/></svg>
<svg style="left:12px;top:690px;" width="23" height="22" viewBox="0 0 23 22"><path d="M2,5 L9,1.5 L17,4 L17,14 L9,19 L2,15 Z" fill="#5fb0d8" stroke="#1f4a63" stroke-width="1.1" stroke-linejoin="round"/><path d="M2,5 L9,8 L17,4 M9,8 V19" fill="none" stroke="#1f4a63" stroke-width="1"/><path d="M2,5 L9,8 L9,19 L2,15 Z" fill="#2f7fae" opacity=".6"/><path d="M12,12 L19,9.5 L22,14 L15.5,17.5 L14,20.5 Z" fill="#fff" stroke="#444" stroke-width="1"/></svg>
<div style="left:37px;top:688px;width:174px;height:65px;background:#cde3f7;border:2px solid #62aee6;box-shadow:inset 0 0 0 1px #a9d2f2"></div>
<span style="left:42.4px;top:692.6px;font-size:11px;line-height:11px;font-weight:400;color:#111;letter-spacing:-0.12px">Boss-Extrude1</span>
<span style="left:42.4px;top:708.8px;font-size:11px;line-height:11px;font-weight:400;color:#111;letter-spacing:0.04px">Cut-Extrude2[1]</span>
<div style="left:40px;top:723px;width:168px;height:16px;background:#0a78d6"></div>
<span style="left:42.4px;top:724.8px;font-size:11px;line-height:11px;font-weight:400;color:#fff;letter-spacing:0.13px">Fold2</span>
<svg style="left:120px;top:753px;" width="8" height="8" viewBox="0 0 8 8"><circle cx="4" cy="4" r="2.6" fill="#ececec" stroke="#a0a0a0" stroke-width="1"/></svg>
<div style="left:6px;top:771px;width:214px;height:1px;background:#c8c8c8"></div>
<div style="left:0px;top:777px;width:1267px;height:16px;background:#f3f3f6"></div>
<div style="left:244px;top:777px;width:1021px;height:1px;background:#6e6e6e"></div>
<div style="left:0px;top:776px;width:244px;height:1px;background:#9a9a9a"></div>
<div style="left:1264px;top:777px;width:1px;height:16px;background:#8a8a8a"></div>
<div style="left:2px;top:777px;width:66px;height:16px;background:#c9c9c9;border:1px solid #9a9a9a"></div>
<div style="left:4px;top:778px;width:15px;height:14px;background:#cdcdcd;border:1px solid #b3b3b3"></div>
<svg style="left:5px;top:779px;" width="13" height="12" viewBox="0 0 13 12"><path d="M9,2 L4,6 L9,10 Z M3,2 V10" fill="#b9b9b9" stroke="#b0b0b0" stroke-width="1"/></svg>
<div style="left:20px;top:778px;width:15px;height:14px;background:#cdcdcd;border:1px solid #b3b3b3"></div>
<svg style="left:21px;top:779px;" width="13" height="12" viewBox="0 0 13 12"><path d="M9,2 L4,6 L9,10 Z" fill="#b9b9b9" stroke="#b0b0b0" stroke-width="1"/></svg>
<div style="left:36px;top:778px;width:15px;height:14px;background:#cdcdcd;border:1px solid #b3b3b3"></div>
<svg style="left:37px;top:779px;" width="13" height="12" viewBox="0 0 13 12"><path d="M4,2 L9,6 L4,10 Z" fill="#b9b9b9" stroke="#b0b0b0" stroke-width="1"/></svg>
<div style="left:52px;top:778px;width:15px;height:14px;background:#cdcdcd;border:1px solid #b3b3b3"></div>
<svg style="left:53px;top:779px;" width="13" height="12" viewBox="0 0 13 12"><path d="M3,2 L8,6 L3,10 Z M9.5,2 V10" fill="#b9b9b9" stroke="#b0b0b0" stroke-width="1"/></svg>
<div style="left:68px;top:777px;width:57px;height:16px;background:#fff;border-right:1px solid #8a8a8a"></div>
<span style="left:80.3px;top:778.9px;font-size:11px;line-height:11px;font-weight:700;color:#111;letter-spacing:0.50px">Model</span>
<div style="left:125px;top:777px;width:68px;height:16px;background:#cfcfcf;border:1px solid #8a8a8a;border-left:none;border-bottom:none"></div>
<span style="left:135.6px;top:778.9px;font-size:11px;line-height:11px;font-weight:400;color:#111;letter-spacing:-0.01px">3D Views</span>
<div style="left:193px;top:777px;width:108px;height:16px;background:#cfcfcf;border:1px solid #8a8a8a;border-left:none;border-bottom:none"></div>
<span style="left:202.0px;top:778.9px;font-size:11px;line-height:11px;font-weight:400;color:#111;letter-spacing:0.47px">Motion Study 1</span>
<div style="left:0px;top:792px;width:1267px;height:1px;background:#6e6e6e"></div>
<div style="left:0px;top:793px;width:1267px;height:18px;background:#f3f3f3"></div>
<span style="left:2.5px;top:797.6px;font-size:11px;line-height:11px;font-weight:400;color:#111;letter-spacing:0.31px">Select edge or axis for direction reference, select face of feature for pattern features</span>
<span style="left:962.4px;top:797.6px;font-size:11px;line-height:11px;font-weight:400;color:#111;letter-spacing:0.31px">Editing Part</span>
<span style="left:1141.5px;top:797.6px;font-size:11px;line-height:11px;font-weight:400;color:#9c9c9c;letter-spacing:0.32px">MMGS</span>
<svg style="left:1195px;top:800px;" width="7" height="5" viewBox="0 0 7 5"><path d="M0,4.5 L3.5,0.5 L7,4.5 Z" fill="#8a8a8a"/></svg>
<svg style="left:1227px;top:795px;" width="19" height="15" viewBox="0 0 19 15"><path d="M1.5,5 L6,1.5 L17,7 V11 L11,14 L3,9.5 Z" fill="#f6f6f6" stroke="#222" stroke-width="1.3" stroke-linejoin="round"/><path d="M3,9 L11,10.5 L17,7 M11,10.5 V14" fill="none" stroke="#222" stroke-width="1.1"/><circle cx="6.5" cy="5" r="2" fill="#ccc" stroke="#222" stroke-width="1"/><path d="M9.5,7.5 L14,6.3" stroke="#222" stroke-width="1.4"/></svg>
<svg style="left:1255px;top:800px;" width="10" height="10" viewBox="0 0 10 10"><g fill="#b0b0b0"><rect x="7" y="1" width="2" height="2"/><rect x="4" y="4" width="2" height="2"/><rect x="7" y="4" width="2" height="2"/><rect x="1" y="7" width="2" height="2"/><rect x="4" y="7" width="2" height="2"/><rect x="7" y="7" width="2" height="2"/></g></svg>
<svg style="left:249px;top:159px;" width="5" height="8" viewBox="0 0 5 8"><path d="M0,0 L4.5,3.6 L0,7.2 Z" fill="#222"/></svg>
<svg style="left:266px;top:153px;" width="20" height="20" viewBox="0 0 20 20"><path d="M2,8 L8,3 L11,4.5 L11,9 L13,8 L18,12 L18,16 L11,19.5 L2,13 Z" fill="#e8c637" stroke="#6b5410" stroke-width="1.1" stroke-linejoin="round"/><path d="M2,8 L6,10.5 L6,6 M6,10.5 L11,13.5 L18,12 M11,13.5 V19.5 M6,6 L8,3 M6,10.5 L11,9" fill="none" stroke="#6b5410" stroke-width=".9"/><path d="M2,8 L6,10.5 L11,13.5 L11,19.5 L2,13 Z" fill="#caa21f" opacity=".55"/></svg>
<span style="left:289.3px;top:158.6px;font-size:11px;line-height:11px;font-weight:400;color:#111;letter-spacing:0.18px">Sheet Metal Screw  (Defau...</span>
<svg style="left:577px;top:152px;" width="21" height="21" viewBox="0 0 21 21"><path d="M8.3,12.2 L2.6,17.9" stroke="#5f8f9a" stroke-width="4.4" stroke-linecap="round"/><path d="M8.3,12.2 L2.6,17.9" stroke="#8cc4cc" stroke-width="2.6" stroke-linecap="round"/><circle cx="12.5" cy="8" r="6" fill="#eef2f4" stroke="#8b979e" stroke-width="1.6"/><path d="M12.5,4.5 V11.5 M9,8 H16" stroke="#555" stroke-width="1"/><path d="M12.5,3.5 l-1.5,2 h3 Z M12.5,12.5 l-1.5,-2 h3 Z M8,8 l2,-1.5 v3 Z M17,8 l-2,-1.5 v3 Z" fill="#555"/></svg>
<svg style="left:603px;top:152px;" width="21" height="21" viewBox="0 0 21 21"><path d="M8.3,12.2 L2.6,17.9" stroke="#5f8f9a" stroke-width="4.4" stroke-linecap="round"/><path d="M8.3,12.2 L2.6,17.9" stroke="#8cc4cc" stroke-width="2.6" stroke-linecap="round"/><circle cx="12.5" cy="8" r="6" fill="#eef2f4" stroke="#8b979e" stroke-width="1.6"/><rect x="7" y="1.5" width="12.5" height="12" fill="none" stroke="#555" stroke-width="1" stroke-dasharray="2.2,1.6"/></svg>
<svg style="left:629px;top:153px;" width="21" height="21" viewBox="0 0 21 21"><path d="M2,14.5 L13,3.5 L17.5,8 L8,19.5 C5,20 2,17.5 2,14.5 Z" fill="#d5dde0" stroke="#8b979e" stroke-width="1.1"/><path d="M13,3.5 L16,1.2 L20,5.2 L17.5,8 Z" fill="#eceff0" stroke="#8b979e" stroke-width="1"/><ellipse cx="5" cy="17" rx="2.6" ry="3.6" transform="rotate(-42 5 17)" fill="#9fd0d6" stroke="#6a959e" stroke-width=".9"/><path d="M19.5,14 H12 M14.6,11 L11,14 L14.6,17" fill="none" stroke="#3c8aa6" stroke-width="2.1"/></svg>
<svg style="left:655px;top:154px;" width="21" height="19" viewBox="0 0 21 19"><path d="M2,5 L9,2 L9,15 L2,18 Z M9,2 L12,3.5 L12,16.5 L9,15 M12,3.5 L19,1.5 V14 L12,16.5" fill="#ececec" stroke="#d0d0d0" stroke-width="1.1"/></svg>
<svg style="left:680px;top:153px;" width="22" height="22" viewBox="0 0 22 22"><path d="M3,15 L13,4 L17,8 L8,18 Z" fill="#d8d8d8" stroke="#8a8a8a" stroke-width="1.1"/><path d="M9,1 L5,8 H8.5 L6,14 L13,6 H9.5 L12,1 Z" fill="#f0c020" stroke="#a88300" stroke-width=".7"/><text x="11.5" y="20.5" font-size="12" font-weight="700" font-family="Liberation Serif,serif" fill="#3a8fb0">A</text></svg>
<svg style="left:706px;top:153px;" width="22" height="21" viewBox="0 0 22 21"><path d="M2,7 H14 V19 H2 Z" fill="#8ec5e6" stroke="#333" stroke-width="1.2"/><path d="M2,7 L8,2 H20 L14,7 M20,2 V14 L14,19" fill="#fff" stroke="#333" stroke-width="1.2"/><path d="M14,7 L20,2" stroke="#333" stroke-width="1.2"/><path d="M11,4.5 H17 M17,5 V12" stroke="#333" stroke-width=".8" stroke-dasharray="1.5,1.2"/></svg>
<svg style="left:734.5px;top:162.75px;" width="5.0" height="3.5" viewBox="0 0 5.0 3.5"><path d="M0,0 L5.0,0 L2.5,2.5 Z" fill="#9a9a9a"/></svg>
<svg style="left:747px;top:153px;" width="22" height="21" viewBox="0 0 22 21"><path d="M2,5 L8,2 L19,3.5 V16 L8,19.5 L2,16 Z" fill="#fff" stroke="#333" stroke-width="1.2" stroke-linejoin="round"/><path d="M2,5 L8,7 V19.5 L2,16 Z" fill="#4f97c4"/><path d="M8,7 L19,3.5 V16 L8,19.5 Z" fill="#e9f1f6"/><path d="M8,7 V19.5 M2,5 L8,7 L19,3.5" fill="none" stroke="#333" stroke-width="1.1"/><path d="M8,7 L13,5.5 V18 L8,19.5 Z" fill="#8ec5e6"/></svg>
<svg style="left:773.5px;top:162.75px;" width="5.0" height="3.5" viewBox="0 0 5.0 3.5"><path d="M0,0 L5.0,0 L2.5,2.5 Z" fill="#9a9a9a"/></svg>
<svg style="left:787px;top:154px;" width="22" height="20" viewBox="0 0 22 20"><path d="M1,10 C5,3 17,3 21,10 C17,16 5,16 1,10 Z" fill="#d9d9d9" stroke="#8a8a8a" stroke-width="1.1"/><circle cx="11" cy="9.5" r="4.6" fill="#666"/><circle cx="11" cy="9.5" r="2" fill="#222"/><path d="M11,1 V19" stroke="#777" stroke-width="1"/></svg>
<svg style="left:813.5px;top:162.75px;" width="5.0" height="3.5" viewBox="0 0 5.0 3.5"><path d="M0,0 L5.0,0 L2.5,2.5 Z" fill="#9a9a9a"/></svg>
<svg style="left:827px;top:153px;" width="22" height="22" viewBox="0 0 22 22"><circle cx="10" cy="9" r="7.5" fill="#e6e6e6" stroke="#dadada"/><circle cx="14" cy="13" r="6" fill="#ededed" stroke="#dcdcdc"/></svg>
<svg style="left:852px;top:153px;" width="23" height="22" viewBox="0 0 23 22"><circle cx="11.5" cy="9" r="7.5" fill="#e6e6e6" stroke="#dadada"/><path d="M2,13 L11.5,18 L21,13 V20 H2 Z" fill="#eee" stroke="#dcdcdc"/></svg>
<svg style="left:879.5px;top:162.75px;" width="5.0" height="3.5" viewBox="0 0 5.0 3.5"><path d="M0,0 L5.0,0 L2.5,2.5 Z" fill="#b0b0b0"/></svg>
<svg style="left:892px;top:154px;" width="22" height="20" viewBox="0 0 22 20"><rect x="1.5" y="1.5" width="19" height="12.5" fill="#cdd3d6" stroke="#555" stroke-width="1.3"/><path d="M11,14 V17.5 M6,18 H16" stroke="#333" stroke-width="1.8"/><path d="M4,5 H18 M4,8 H18 M4,11 H18" stroke="#b8bec2" stroke-width=".8"/></svg>
<svg style="left:919.5px;top:162.75px;" width="5.0" height="3.5" viewBox="0 0 5.0 3.5"><path d="M0,0 L5.0,0 L2.5,2.5 Z" fill="#9a9a9a"/></svg>
<svg style="left:1136px;top:135px;" width="13" height="13" viewBox="0 0 13 13"><rect x="0.6" y="0.6" width="11.8" height="11.8" fill="#fff" stroke="#9a9a9a" stroke-width="1.1"/><path d="M5.5,3.5 L2.5,6.5 L5.5,9.5 Z" fill="#9a9a9a"/></svg>
<svg style="left:1162px;top:135px;" width="13" height="13" viewBox="0 0 13 13"><rect x="0.6" y="0.6" width="11.8" height="11.8" fill="#fff" stroke="#9a9a9a" stroke-width="1.1"/><path d="M7.5,3.5 L10.5,6.5 L7.5,9.5 Z" fill="#9a9a9a"/></svg>
<div style="left:1189px;top:144px;width:10px;height:3px;background:#9a9a9a"></div>
<svg style="left:1213px;top:134px;" width="14" height="13" viewBox="0 0 14 13"><rect x="3.6" y="0.6" width="9.5" height="7.5" fill="#fff" stroke="#9a9a9a" stroke-width="1.1"/><rect x="0.6" y="3.6" width="9.5" height="8" fill="#fff" stroke="#9a9a9a" stroke-width="1.1"/></svg>
<svg style="left:1240px;top:135px;" width="12" height="12" viewBox="0 0 12 12"><path d="M1,1 L11,11 M11,1 L1,11" stroke="#9a9a9a" stroke-width="1.3"/></svg>
<svg style="left:1162px;top:183px;" width="30" height="24" viewBox="0 0 30 24"><path d="M2,13 L6.5,8.5 L11.5,14 L24,1.5 L28.5,6 L11.5,23 Z" fill="#cfe8cd"/></svg>
<svg style="left:1207px;top:212px;" width="26" height="26" viewBox="0 0 26 26"><path d="M2,5.5 L5.5,2 L13,9.5 L20.5,2 L24,5.5 L16.5,13 L24,20.5 L20.5,24 L13,16.5 L5.5,24 L2,20.5 L9.5,13 Z" fill="#f5d0cf"/></svg>
<div style="left:1240px;top:178px;width:27px;height:24px;background:#d3d3d3;border:1px solid #868686;border-right:none"></div>
<div style="left:1240px;top:201px;width:27px;height:25px;background:#f0f0f0;border:1px solid #868686;border-right:none"></div>
<div style="left:1240px;top:225px;width:27px;height:24px;background:#d3d3d3;border:1px solid #868686;border-right:none"></div>
<div style="left:1240px;top:248px;width:27px;height:25px;background:#d3d3d3;border:1px solid #868686;border-right:none"></div>
<div style="left:1240px;top:272px;width:27px;height:25px;background:#d3d3d3;border:1px solid #868686;border-right:none"></div>
<div style="left:1240px;top:296px;width:27px;height:25px;background:#d3d3d3;border:1px solid #868686;border-right:none"></div>
<svg style="left:1243px;top:180px;" width="22" height="20" viewBox="0 0 22 20"><path d="M1.5,10 L11,1.5 L20.5,10" fill="none" stroke="#1d4f72" stroke-width="2.2"/><path d="M4.5,9.5 V18.5 H17.5 V9.5" fill="#fff" stroke="#222" stroke-width="1.3"/><path d="M9,18.5 V12 H13 V18.5" fill="#fff" stroke="#222" stroke-width="1.2"/></svg>
<svg style="left:1244px;top:203px;" width="20" height="20" viewBox="0 0 20 20"><path d="M2,5 L6,3 L6,17 L2,15 Z M6,3 L8.5,4 M7,5 L11,3 L11,18 L7,16 Z M12,5 L16,3 V17 L12,19 Z M11,3 L13,4.5" fill="#fff" stroke="#222" stroke-width="1.1"/><path d="M16,3 L18,4.5 V16 L16,17" fill="#ddd" stroke="#222" stroke-width="1"/></svg>
<svg style="left:1243px;top:227px;" width="23" height="20" viewBox="0 0 23 20"><path d="M1.5,17.5 V3 H8 L10,5.5 H18 V8" fill="#e8e8e8" stroke="#222" stroke-width="1.3"/><path d="M1.5,17.5 L6,8 H22 L17.5,17.5 Z" fill="#fff" stroke="#222" stroke-width="1.3"/></svg>
<svg style="left:1244px;top:251px;" width="20" height="19" viewBox="0 0 20 19"><rect x="1" y="1" width="18" height="17" fill="#f2cf3a" stroke="#222" stroke-width="1.3"/><rect x="3.5" y="3.5" width="5" height="3.5" fill="#fff" stroke="#222" stroke-width=".9"/><rect x="11" y="3.5" width="5.5" height="3.5" fill="#fff" stroke="#222" stroke-width=".9"/><path d="M4,15 H11 V12 H9 V9 H6.5 V12 H4 Z" fill="#fff" stroke="#222" stroke-width=".9"/><rect x="13.5" y="9.5" width="3.5" height="6" fill="#ccc" stroke="#222" stroke-width=".9"/></svg>
<svg style="left:1243px;top:274px;" width="21" height="21" viewBox="0 0 21 21"><path d="M10.5,10.5 L1.81,8.17 A9,9 0 0 1 15.00,2.71 Z" fill="#e23b2e"/><path d="M10.5,10.5 L15.00,2.71 A9,9 0 0 1 19.36,12.06 Z" fill="#e23b2e"/><path d="M10.5,10.5 L19.36,12.06 A9,9 0 0 1 9.72,19.47 Z" fill="#e8c020"/><path d="M10.5,10.5 L9.72,19.47 A9,9 0 0 1 1.81,12.83 Z" fill="#4cb04a"/><path d="M10.5,10.5 L1.81,12.83 A9,9 0 0 1 1.81,8.17 Z" fill="#3f8fd6"/><circle cx="10.5" cy="10.5" r="9" fill="none" stroke="#6e6e6e" stroke-width=".8"/><ellipse cx="8.0" cy="6.0" rx="3.6" ry="2.2" fill="#fff" opacity=".45"/></svg>
<svg style="left:1244px;top:298px;" width="20" height="20" viewBox="0 0 20 20"><rect x="1" y="1" width="18" height="17.5" fill="#fff" stroke="#1d3f5a" stroke-width="1.4"/><rect x="1.6" y="1.6" width="16.8" height="3.8" fill="#3b8fc9"/><rect x="3.5" y="7.4" width="4" height="2.4" fill="#3b8fc9" stroke="#1d3f5a" stroke-width=".7"/><rect x="3.5" y="11.2" width="4" height="2.4" fill="#3b8fc9" stroke="#1d3f5a" stroke-width=".7"/><rect x="3.5" y="14.8" width="4" height="2.2" fill="#3b8fc9" stroke="#1d3f5a" stroke-width=".7"/><path d="M9.5,8.6 H16.5 M9.5,12.4 H16.5 M9.5,15.9 H16.5" stroke="#1d3f5a" stroke-width="1.2"/></svg>
<svg style="left:0px;top:0px;" width="1267" height="812" viewBox="0 0 1267 812"><path d="M541.9,567.8 L895.8,244.1 M550.0,576.7 L903.9,252.9" fill="none" stroke="#e6f58a" stroke-width="1"/><path d="M458.0,556.0 L508.0,510.3 M604.2,615.5 L657.2,566.9 M560.0,462.6 L610.0,417.0 M706.2,522.2 L759.2,473.6 M662.0,369.4 L712.0,323.7 M808.2,428.9 L861.2,380.3 M764.0,276.1 L814.0,230.4 M910.2,335.6 L963.2,287.0" fill="none" stroke="#f2fa55" stroke-width="1.2"/><path d="M537.6,579.8 L536.3,576.9 L534.9,574.1 L533.5,571.2 L532.1,568.4 L530.7,565.6 L529.3,562.8 L528.0,560.1 L526.6,557.4 L525.3,554.8 L524.0,552.2 L522.7,549.6 L521.4,547.1 L520.2,544.7 L519.0,542.3 L517.8,540.0 L516.7,537.8 L515.6,535.6 L514.6,533.5 L513.7,531.5 L512.8,529.6 L511.9,527.7 L511.1,525.9 L510.4,524.2 L509.7,522.6 L509.1,521.1 L508.6,519.7 L508.2,518.3 L507.8,517.1 L507.5,515.9 L507.3,514.9 L507.2,513.9 L507.1,513.0 L507.1,512.3 L507.3,511.6 L507.5,511.0 L507.8,510.6 L508.1,510.2 L508.6,509.9 L509.2,509.7 L509.8,509.6 L510.5,509.6 L511.4,509.7 L512.3,509.9 L513.3,510.2 L514.4,510.6 L515.6,511.0 L516.8,511.5 L518.2,512.2 L519.6,512.9 L521.1,513.6 L522.7,514.5 L524.4,515.4 L526.2,516.4 L528.0,517.5 L529.9,518.6 L531.9,519.8 L533.9,521.0 L536.0,522.3 L538.2,523.6 L540.4,525.0 L542.7,526.4 L545.1,527.9 L547.5,529.4 L549.9,530.9 L552.4,532.5 L555.0,534.1 L557.6,535.7 L560.2,537.3 L562.8,538.9 L565.5,540.6 L568.2,542.2 L570.9,543.8 L573.7,545.5 L576.5,547.1 L579.2,548.7 L582.0,550.3 L584.8,551.8 L587.6,553.3 L590.3,554.8 L593.1,556.3 L595.8,557.7 L598.6,559.1 L601.3,560.5 L604.0,561.8 L606.6,563.0 L609.3,564.2 L611.9,565.3 L614.4,566.4 L617.0,567.4 L619.4,568.3 L621.9,569.1 L624.2,569.9 L626.5,570.6 L628.8,571.2 L631.0,571.8 L633.2,572.2 L635.2,572.6 L637.2,572.9 L639.2,573.0 L641.0,573.1 L642.8,573.1 L644.5,573.1 L646.2,572.9 L647.7,572.6 L649.2,572.2 L650.6,571.7 L651.9,571.2 L653.1,570.5 L654.2,569.7 L655.2,568.9 L656.2,567.9 L657.1,566.9 L657.8,565.7 L658.5,564.5 L659.1,563.1 L659.6,561.7 L660.0,560.2 L660.4,558.6 L660.6,556.9 L660.8,555.1 L660.8,553.2 L660.8,551.3 L660.7,549.3 L660.5,547.2 L660.3,545.0 L659.9,542.8 L659.5,540.4 L659.0,538.1 L658.5,535.6 L657.8,533.1 L657.1,530.6 L656.4,528.0 L655.6,525.4 L654.7,522.7 L653.7,519.9 L652.7,517.2 L651.7,514.4 L650.6,511.6 L649.5,508.7 L648.3,505.9 L647.1,503.0 L645.8,500.1 L644.5,497.2 L643.2,494.3 L641.9,491.4 L640.5,488.5 L639.2,485.6 L637.8,482.7 L636.4,479.8 L635.0,477.0 L633.6,474.2 L632.3,471.4 L630.9,468.6 L629.5,465.9 L628.2,463.2 L626.8,460.6 L625.5,458.0 L624.3,455.5 L623.0,453.0 L621.8,450.6 L620.6,448.3 L619.5,446.0 L618.4,443.8 L617.3,441.6 L616.3,439.5 L615.4,437.5 L614.5,435.6 L613.6,433.8 L612.9,432.0 L612.2,430.4 L611.5,428.8 L611.0,427.3 L610.5,425.9 L610.0,424.6 L609.7,423.4 L609.4,422.3 L609.2,421.2 L609.1,420.3 L609.1,419.5 L609.2,418.7 L609.3,418.1 L609.6,417.6 L609.9,417.1 L610.3,416.8 L610.8,416.5 L611.4,416.4 L612.0,416.3 L612.8,416.4 L613.7,416.5 L614.6,416.7 L615.6,417.0 L616.8,417.4 L618.0,417.9 L619.3,418.4 L620.6,419.1 L622.1,419.8 L623.6,420.6 L625.3,421.5 L627.0,422.4 L628.7,423.4 L630.6,424.5 L632.5,425.7 L634.5,426.9 L636.6,428.1 L638.7,429.4 L640.9,430.8 L643.2,432.2 L645.5,433.6 L647.9,435.1 L650.3,436.6 L652.8,438.2 L655.3,439.7 L657.8,441.3 L660.4,442.9 L663.1,444.5 L665.7,446.2 L668.4,447.8 L671.1,449.4 L673.9,451.1 L676.6,452.7 L679.4,454.3 L682.1,455.9 L684.9,457.5 L687.7,459.0 L690.5,460.5 L693.2,462.0 L696.0,463.5 L698.7,464.9 L701.5,466.3 L704.2,467.6 L706.9,468.9 L709.5,470.1 L712.1,471.3 L714.7,472.4 L717.3,473.4 L719.8,474.4 L722.2,475.3 L724.6,476.1 L727.0,476.8 L729.3,477.5 L731.5,478.1 L733.7,478.6 L735.8,479.0 L737.9,479.4 L739.9,479.6 L741.8,479.8 L743.6,479.9 L745.4,479.8 L747.1,479.7 L748.7,479.5 L750.2,479.2 L751.6,478.8 L753.0,478.3 L754.3,477.7 L755.5,477.0 L756.6,476.2 L757.6,475.3 L758.5,474.3 L759.3,473.2 L760.1,472.0 L760.7,470.7 L761.3,469.4 L761.8,467.9 L762.2,466.4 L762.5,464.7 L762.7,463.0 L762.8,461.2 L762.8,459.3 L762.8,457.3 L762.7,455.3 L762.5,453.2 L762.2,451.0 L761.8,448.7 L761.4,446.4 L760.9,444.0 L760.3,441.5 L759.6,439.0 L758.9,436.4 L758.1,433.8 L757.3,431.2 L756.4,428.5 L755.4,425.7 L754.4,423.0 L753.3,420.2 L752.2,417.3 L751.1,414.5 L749.9,411.6 L748.6,408.7 L747.4,405.8 L746.1,402.9 L744.8,400.0 L743.4,397.1 L742.1,394.2 L740.7,391.3 L739.3,388.4 L738.0,385.6 L736.6,382.8 L735.2,379.9 L733.8,377.2 L732.4,374.4 L731.1,371.7 L729.7,369.1 L728.4,366.5 L727.1,363.9 L725.8,361.4 L724.6,358.9 L723.4,356.5 L722.2,354.2 L721.1,351.9 L720.0,349.7 L719.0,347.6 L718.0,345.6 L717.1,343.6 L716.2,341.7 L715.4,339.9 L714.6,338.2 L713.9,336.5 L713.3,335.0 L712.8,333.5 L712.3,332.2 L711.9,330.9 L711.6,329.7 L711.4,328.6 L711.2,327.6 L711.1,326.7 L711.1,325.9 L711.2,325.2 L711.4,324.6 L711.6,324.1 L712.0,323.7 L712.4,323.4 L713.0,323.2 L713.6,323.0 L714.3,323.0 L715.1,323.1 L716.0,323.2 L716.9,323.5 L718.0,323.8 L719.1,324.2 L720.4,324.8 L721.7,325.3 L723.1,326.0 L724.6,326.8 L726.2,327.6 L727.8,328.5 L729.5,329.5 L731.4,330.5 L733.2,331.6 L735.2,332.8 L737.2,334.0 L739.3,335.2 L741.5,336.6 L743.7,337.9 L745.9,339.4 L748.3,340.8 L750.7,342.3 L753.1,343.8 L755.6,345.4 L758.1,347.0 L760.7,348.5 L763.3,350.2 L765.9,351.8 L768.6,353.4 L771.3,355.0 L774.0,356.7 L776.8,358.3 L779.5,359.9 L782.3,361.5 L785.1,363.1 L787.8,364.7 L790.6,366.2 L793.4,367.7 L796.2,369.2 L798.9,370.7 L801.7,372.1 L804.4,373.4 L807.1,374.7 L809.7,376.0 L812.4,377.2 L815.0,378.3 L817.6,379.4 L820.1,380.4 L822.6,381.4 L825.0,382.3 L827.4,383.1 L829.8,383.8 L832.1,384.4 L834.3,385.0 L836.4,385.5 L838.5,385.9 L840.6,386.2 L842.5,386.4 L844.4,386.5 L846.2,386.6 L848.0,386.5 L849.6,386.3 L851.2,386.1 L852.7,385.8 L854.1,385.3 L855.4,384.8 L856.7,384.1 L857.8,383.4 L858.9,382.6 L859.9,381.6 L860.8,380.6 L861.6,379.5 L862.3,378.3 L862.9,377.0 L863.5,375.6 L863.9,374.1 L864.3,372.5 L864.5,370.9 L864.7,369.1 L864.8,367.3 L864.8,365.4 L864.8,363.4 L864.6,361.3 L864.4,359.1 L864.1,356.9 L863.7,354.6 L863.2,352.3 L862.7,349.9 L862.1,347.4 L861.4,344.9 L860.6,342.3 L859.8,339.7 L859.0,337.0 L858.1,334.3 L857.1,331.5 L856.0,328.7 L855.0,325.9 L853.8,323.1 L852.7,320.2 L851.5,317.3 L850.2,314.5 L849.0,311.6 L847.7,308.6 L846.3,305.7 L845.0,302.8 L843.6,299.9 L842.3,297.1 L840.9,294.2 L839.5,291.3 L838.1,288.5 L836.7,285.7 L835.4,283.0 L834.0,280.2 L832.6,277.5 L831.3,274.9 L830.0,272.3 L828.7,269.8 L827.4,267.3 L826.2,264.8 L825.0,262.5 L823.8,260.1 L822.7,257.9 L821.7,255.7 L820.6,253.6 L819.7,251.6 L818.8,249.7 L817.9,247.8 L817.1,246.0 L816.4,244.3 L815.7,242.7 L815.1,241.2 L814.6,239.8 L814.2,238.4 L813.8,237.2 L813.5,236.0 L813.3,235.0 L813.2,234.0 L813.1,233.1 L813.1,232.4 L813.3,231.7 L813.5,231.1 L813.8,230.7 L814.1,230.3 L814.6,230.0 L815.2,229.8 L815.8,229.7 L816.5,229.7 L817.4,229.8 L818.3,230.0 L819.3,230.3 L820.4,230.7 L821.5,231.1 L822.8,231.6 L824.2,232.3 L825.6,233.0 L827.1,233.7 L828.7,234.6 L830.4,235.5 L832.1,236.5 L834.0,237.6 L835.9,238.7 L837.8,239.9 L839.9,241.1 L842.0,242.4 L844.2,243.7 L846.4,245.1 L848.7,246.5 L851.1,248.0 L853.5,249.5 L855.9,251.0 L858.4,252.6 L861.0,254.2 L863.5,255.8 L866.2,257.4 L868.8,259.0 L871.5,260.7 L874.2,262.3 L876.9,263.9 L879.7,265.5 L882.4,267.2 L885.2,268.8 L888.0,270.3 L890.8,271.9 L893.5,273.4 L896.3,274.9 L899.1,276.4 L901.8,277.8 L904.6,279.2 L907.3,280.6 L910.0,281.9 L912.6,283.1 L915.3,284.3 L917.9,285.4 L920.4,286.5 L922.9,287.5 L925.4,288.4 L927.8,289.2 L930.2,290.0 L932.5,290.7 L934.8,291.3 L937.0,291.9 L939.1,292.3 L941.2,292.7 L943.2,293.0 L945.2,293.1 L947.0,293.2 L948.8,293.2 L950.5,293.2 L952.1,293.0 L953.7,292.7 L955.2,292.3 L956.6,291.8 L957.9,291.3 L959.1,290.6 L960.2,289.8 L961.2,289.0 L962.2,288.0 L963.1,287.0 L963.8,285.8 L964.5,284.6 L965.1,283.2 L965.6,281.8 L966.0,280.3 L966.4,278.7 L966.6,277.0 L966.8,275.2 L966.8,273.3 L966.8,271.4 L966.7,269.4 L966.5,267.3 L966.3,265.1 L965.9,262.9 L965.5,260.6 L965.0,258.2 L964.5,255.8 L963.8,253.3 L963.2,250.7 L962.4,248.1 L961.6,245.5 L960.7,242.8 L959.7,240.1 L958.7,237.3 L957.7,234.5 L956.6,231.7 L955.5,228.8 L954.3,226.0 L953.1,223.1 L951.8,220.2 L950.5,217.3 L949.2,214.4 L947.9,211.5 L946.6,208.6 L945.2,205.7 L943.8,202.8 L942.4,199.9 L941.0,197.1 L939.7,194.3 L938.3,191.5 L936.9,188.8 L935.5,186.0 L934.2,183.4 L932.9,180.7 L931.5,178.2 L930.3,175.6 L929.0,173.2 L927.8,170.7" fill="none" stroke="#fdfd10" stroke-width="3" stroke-linejoin="round"/><path d="M486.6,626.5 L485.3,623.6 L483.9,620.7 L482.5,617.9 L481.1,615.1 L479.7,612.3 L478.3,609.5 L477.0,606.8 L475.6,604.1 L474.3,601.4 L473.0,598.8 L471.7,596.3 L470.4,593.8 L469.2,591.4 L468.0,589.0 L466.8,586.7 L465.7,584.4 L464.6,582.3 L463.6,580.2 L462.7,578.1 L461.8,576.2 L460.9,574.3 L460.1,572.6 L459.4,570.9 L458.7,569.3 L458.1,567.7 L457.6,566.3 L457.2,565.0 L456.8,563.7 L456.5,562.6 L456.3,561.5 L456.2,560.6 L456.1,559.7 L456.1,558.9 L456.3,558.3 L456.5,557.7 L456.8,557.2 L457.1,556.8 L457.6,556.6 L458.2,556.4 L458.8,556.3 L459.5,556.3 L460.4,556.4 L461.3,556.6 L462.3,556.8 L463.4,557.2 L464.6,557.7 L465.8,558.2 L467.2,558.8 L468.6,559.5 L470.1,560.3 L471.7,561.1 L473.4,562.1 L475.2,563.1 L477.0,564.1 L478.9,565.2 L480.9,566.4 L482.9,567.6 L485.0,568.9 L487.2,570.3 L489.4,571.7 L491.7,573.1 L494.1,574.6 L496.5,576.1 L498.9,577.6 L501.4,579.2 L504.0,580.7 L506.6,582.3 L509.2,584.0 L511.8,585.6 L514.5,587.2 L517.2,588.8 L519.9,590.5 L522.7,592.1 L525.5,593.7 L528.2,595.3 L531.0,596.9 L533.8,598.5 L536.6,600.0 L539.3,601.5 L542.1,603.0 L544.8,604.4 L547.6,605.8 L550.3,607.1 L553.0,608.4 L555.6,609.7 L558.3,610.8 L560.9,612.0 L563.4,613.0 L566.0,614.0 L568.4,614.9 L570.9,615.8 L573.2,616.6 L575.5,617.3 L577.8,617.9 L580.0,618.4 L582.2,618.9 L584.2,619.2 L586.2,619.5 L588.2,619.7 L590.0,619.8 L591.8,619.8 L593.5,619.7 L595.2,619.5 L596.7,619.2 L598.2,618.9 L599.6,618.4 L600.9,617.8 L602.1,617.2 L603.2,616.4 L604.2,615.5 L605.2,614.6 L606.1,613.5 L606.8,612.4 L607.5,611.1 L608.1,609.8 L608.6,608.3 L609.0,606.8 L609.4,605.2 L609.6,603.5 L609.8,601.7 L609.8,599.9 L609.8,597.9 L609.7,595.9 L609.5,593.8 L609.3,591.6 L608.9,589.4 L608.5,587.1 L608.0,584.7 L607.5,582.3 L606.8,579.8 L606.1,577.3 L605.4,574.7 L604.6,572.0 L603.7,569.3 L602.7,566.6 L601.7,563.8 L600.7,561.0 L599.6,558.2 L598.5,555.4 L597.3,552.5 L596.1,549.6 L594.8,546.7 L593.5,543.8 L592.2,540.9 L590.9,538.0 L589.5,535.1 L588.2,532.2 L586.8,529.3 L585.4,526.5 L584.0,523.6 L582.6,520.8 L581.3,518.0 L579.9,515.3 L578.5,512.6 L577.2,509.9 L575.8,507.3 L574.5,504.7 L573.3,502.2 L572.0,499.7 L570.8,497.3 L569.6,494.9 L568.5,492.6 L567.4,490.4 L566.3,488.3 L565.3,486.2 L564.4,484.2 L563.5,482.3 L562.6,480.4 L561.9,478.7 L561.2,477.0 L560.5,475.4 L560.0,474.0 L559.5,472.6 L559.0,471.2 L558.7,470.0 L558.4,468.9 L558.2,467.9 L558.1,467.0 L558.1,466.1 L558.2,465.4 L558.3,464.8 L558.6,464.2 L558.9,463.8 L559.3,463.4 L559.8,463.2 L560.4,463.0 L561.0,463.0 L561.8,463.0 L562.7,463.1 L563.6,463.3 L564.6,463.7 L565.8,464.0 L567.0,464.5 L568.3,465.1 L569.6,465.7 L571.1,466.5 L572.6,467.3 L574.3,468.1 L576.0,469.1 L577.7,470.1 L579.6,471.2 L581.5,472.3 L583.5,473.5 L585.6,474.8 L587.7,476.1 L589.9,477.4 L592.2,478.8 L594.5,480.3 L596.9,481.8 L599.3,483.3 L601.8,484.8 L604.3,486.4 L606.8,488.0 L609.4,489.6 L612.1,491.2 L614.7,492.8 L617.4,494.5 L620.1,496.1 L622.9,497.7 L625.6,499.3 L628.4,501.0 L631.1,502.5 L633.9,504.1 L636.7,505.7 L639.5,507.2 L642.2,508.7 L645.0,510.1 L647.7,511.6 L650.5,512.9 L653.2,514.3 L655.9,515.5 L658.5,516.8 L661.1,517.9 L663.7,519.0 L666.3,520.1 L668.8,521.0 L671.2,521.9 L673.6,522.7 L676.0,523.5 L678.3,524.2 L680.5,524.8 L682.7,525.3 L684.8,525.7 L686.9,526.0 L688.9,526.3 L690.8,526.4 L692.6,526.5 L694.4,526.5 L696.1,526.4 L697.7,526.1 L699.2,525.8 L700.6,525.4 L702.0,524.9 L703.3,524.3 L704.5,523.6 L705.6,522.8 L706.6,521.9 L707.5,520.9 L708.3,519.8 L709.1,518.7 L709.7,517.4 L710.3,516.0 L710.8,514.6 L711.2,513.0 L711.5,511.4 L711.7,509.6 L711.8,507.8 L711.8,505.9 L711.8,504.0 L711.7,501.9 L711.5,499.8 L711.2,497.6 L710.8,495.3 L710.4,493.0 L709.9,490.6 L709.3,488.2 L708.6,485.7 L707.9,483.1 L707.1,480.5 L706.3,477.8 L705.4,475.1 L704.4,472.4 L703.4,469.6 L702.3,466.8 L701.2,464.0 L700.1,461.1 L698.9,458.2 L697.6,455.4 L696.4,452.5 L695.1,449.6 L693.8,446.7 L692.4,443.7 L691.1,440.9 L689.7,438.0 L688.3,435.1 L687.0,432.2 L685.6,429.4 L684.2,426.6 L682.8,423.8 L681.4,421.1 L680.1,418.4 L678.7,415.7 L677.4,413.1 L676.1,410.5 L674.8,408.0 L673.6,405.6 L672.4,403.2 L671.2,400.9 L670.1,398.6 L669.0,396.4 L668.0,394.3 L667.0,392.2 L666.1,390.3 L665.2,388.4 L664.4,386.6 L663.6,384.8 L662.9,383.2 L662.3,381.6 L661.8,380.2 L661.3,378.8 L660.9,377.5 L660.6,376.3 L660.4,375.3 L660.2,374.3 L660.1,373.4 L660.1,372.6 L660.2,371.9 L660.4,371.3 L660.6,370.8 L661.0,370.4 L661.4,370.0 L662.0,369.8 L662.6,369.7 L663.3,369.7 L664.1,369.7 L665.0,369.9 L665.9,370.1 L667.0,370.5 L668.1,370.9 L669.4,371.4 L670.7,372.0 L672.1,372.7 L673.6,373.4 L675.2,374.2 L676.8,375.1 L678.5,376.1 L680.4,377.1 L682.2,378.2 L684.2,379.4 L686.2,380.6 L688.3,381.9 L690.5,383.2 L692.7,384.6 L694.9,386.0 L697.3,387.5 L699.7,389.0 L702.1,390.5 L704.6,392.0 L707.1,393.6 L709.7,395.2 L712.3,396.8 L714.9,398.4 L717.6,400.1 L720.3,401.7 L723.0,403.3 L725.8,405.0 L728.5,406.6 L731.3,408.2 L734.1,409.8 L736.8,411.3 L739.6,412.9 L742.4,414.4 L745.2,415.9 L747.9,417.3 L750.7,418.7 L753.4,420.1 L756.1,421.4 L758.7,422.6 L761.4,423.8 L764.0,425.0 L766.6,426.1 L769.1,427.1 L771.6,428.0 L774.0,428.9 L776.4,429.7 L778.8,430.4 L781.1,431.1 L783.3,431.6 L785.4,432.1 L787.5,432.5 L789.6,432.8 L791.5,433.0 L793.4,433.2 L795.2,433.2 L797.0,433.1 L798.6,433.0 L800.2,432.7 L801.7,432.4 L803.1,432.0 L804.4,431.4 L805.7,430.8 L806.8,430.1 L807.9,429.2 L808.9,428.3 L809.8,427.3 L810.6,426.2 L811.3,424.9 L811.9,423.6 L812.5,422.2 L812.9,420.8 L813.3,419.2 L813.5,417.5 L813.7,415.8 L813.8,413.9 L813.8,412.0 L813.8,410.0 L813.6,407.9 L813.4,405.8 L813.1,403.6 L812.7,401.3 L812.2,398.9 L811.7,396.5 L811.1,394.0 L810.4,391.5 L809.6,388.9 L808.8,386.3 L808.0,383.6 L807.1,380.9 L806.1,378.2 L805.0,375.4 L804.0,372.6 L802.8,369.7 L801.7,366.9 L800.5,364.0 L799.2,361.1 L798.0,358.2 L796.7,355.3 L795.3,352.4 L794.0,349.5 L792.6,346.6 L791.3,343.7 L789.9,340.8 L788.5,338.0 L787.1,335.2 L785.7,332.4 L784.4,329.6 L783.0,326.9 L781.6,324.2 L780.3,321.6 L779.0,319.0 L777.7,316.4 L776.4,313.9 L775.2,311.5 L774.0,309.1 L772.8,306.8 L771.7,304.6 L770.7,302.4 L769.6,300.3 L768.7,298.3 L767.8,296.3 L766.9,294.5 L766.1,292.7 L765.4,291.0 L764.7,289.4 L764.1,287.8 L763.6,286.4 L763.2,285.1 L762.8,283.8 L762.5,282.7 L762.3,281.6 L762.2,280.7 L762.1,279.8 L762.1,279.0 L762.3,278.4 L762.5,277.8 L762.8,277.3 L763.1,276.9 L763.6,276.7 L764.2,276.5 L764.8,276.4 L765.5,276.4 L766.4,276.5 L767.3,276.7 L768.3,276.9 L769.4,277.3 L770.5,277.8 L771.8,278.3 L773.2,278.9 L774.6,279.6 L776.1,280.4 L777.7,281.2 L779.4,282.2 L781.1,283.1 L783.0,284.2 L784.9,285.3 L786.8,286.5 L788.9,287.7 L791.0,289.0 L793.2,290.4 L795.4,291.8 L797.7,293.2 L800.1,294.7 L802.5,296.2 L804.9,297.7 L807.4,299.2 L810.0,300.8 L812.5,302.4 L815.2,304.0 L817.8,305.7 L820.5,307.3 L823.2,308.9 L825.9,310.6 L828.7,312.2 L831.4,313.8 L834.2,315.4 L837.0,317.0 L839.8,318.6 L842.5,320.1 L845.3,321.6 L848.1,323.1 L850.8,324.5 L853.6,325.9 L856.3,327.2 L859.0,328.5 L861.6,329.7 L864.3,330.9 L866.9,332.0 L869.4,333.1 L871.9,334.1 L874.4,335.0 L876.8,335.9 L879.2,336.7 L881.5,337.4 L883.8,338.0 L886.0,338.5 L888.1,339.0 L890.2,339.3 L892.2,339.6 L894.2,339.8 L896.0,339.9 L897.8,339.9 L899.5,339.8 L901.1,339.6 L902.7,339.3 L904.2,339.0 L905.6,338.5 L906.9,337.9 L908.1,337.3 L909.2,336.5 L910.2,335.6 L911.2,334.7 L912.1,333.6 L912.8,332.5 L913.5,331.2 L914.1,329.9 L914.6,328.5 L915.0,326.9 L915.4,325.3 L915.6,323.6 L915.8,321.9 L915.8,320.0 L915.8,318.1 L915.7,316.0 L915.5,313.9 L915.3,311.8 L914.9,309.5 L914.5,307.2 L914.0,304.8 L913.5,302.4 L912.8,299.9 L912.2,297.4 L911.4,294.8 L910.6,292.1 L909.7,289.4 L908.7,286.7 L907.7,284.0 L906.7,281.2 L905.6,278.3 L904.5,275.5 L903.3,272.6 L902.1,269.7 L900.8,266.8 L899.5,263.9 L898.2,261.0 L896.9,258.1 L895.6,255.2 L894.2,252.3 L892.8,249.5 L891.4,246.6 L890.0,243.8 L888.7,240.9 L887.3,238.2 L885.9,235.4 L884.5,232.7 L883.2,230.0 L881.9,227.4 L880.5,224.8 L879.3,222.3 L878.0,219.8 L876.8,217.4" fill="none" stroke="#fdfd10" stroke-width="3" stroke-linejoin="round"/><path d="M621.8,450.6 L570.8,497.3" fill="none" stroke="#fdfd10" stroke-width="3"/><path d="M484.9,624.6 L486.7,621.4 L488.6,618.4 L490.6,615.4 L492.6,612.6 L494.8,609.8 L497.2,607.3 L499.6,604.8 L502.2,602.5 L504.9,600.4 L507.8,598.4 L510.8,596.5 L513.8,594.8 L517.0,593.1 L520.3,591.6 L523.6,590.1 L527.0,588.6 L530.4,587.2 L533.7,585.8 L537.1,584.4 L540.5,582.9 L543.8,581.4 L547.0,579.8 L550.1,578.1 L553.1,576.3 L556.0,574.3 L558.8,572.2 L561.4,570.0 L563.9,567.6 L566.3,565.1 L568.6,562.4 L570.7,559.6 L572.7,556.7 L574.6,553.7 L576.5,550.6 L578.3,547.4 L580.0,544.2 L581.7,540.9 L583.4,537.7 L585.1,534.4 L586.9,531.3" fill="none" stroke="#fdfd10" stroke-width="2.4"/><path d="M583.5,522.8 L597.0,537.8" fill="none" stroke="#fdfd10" stroke-width="2.6"/><path d="M723.8,357.3 L672.8,404.0" fill="none" stroke="#fdfd10" stroke-width="3"/><path d="M586.9,531.3 L588.7,528.1 L590.6,525.1 L592.6,522.1 L594.6,519.3 L596.8,516.5 L599.2,514.0 L601.6,511.5 L604.2,509.2 L606.9,507.1 L609.8,505.1 L612.8,503.2 L615.8,501.5 L619.0,499.8 L622.3,498.3 L625.6,496.8 L629.0,495.3 L632.4,493.9 L635.7,492.5 L639.1,491.1 L642.5,489.6 L645.8,488.1 L649.0,486.5 L652.1,484.8 L655.1,483.0 L658.0,481.0 L660.8,478.9 L663.4,476.7 L665.9,474.3 L668.3,471.8 L670.6,469.1 L672.7,466.3 L674.7,463.4 L676.6,460.4 L678.5,457.3 L680.3,454.1 L682.0,450.9 L683.7,447.6 L685.4,444.4 L687.1,441.1 L688.9,438.0" fill="none" stroke="#fdfd10" stroke-width="2.4"/><path d="M685.5,429.5 L699.0,444.5" fill="none" stroke="#fdfd10" stroke-width="2.6"/><path d="M825.8,264.0 L774.8,310.7" fill="none" stroke="#fdfd10" stroke-width="3"/><path d="M688.9,438.0 L690.7,434.8 L692.6,431.8 L694.6,428.8 L696.6,426.0 L698.8,423.2 L701.2,420.7 L703.6,418.2 L706.2,415.9 L708.9,413.8 L711.8,411.8 L714.8,409.9 L717.8,408.2 L721.0,406.5 L724.3,405.0 L727.6,403.5 L731.0,402.0 L734.4,400.6 L737.7,399.2 L741.1,397.8 L744.5,396.3 L747.8,394.8 L751.0,393.2 L754.1,391.5 L757.1,389.7 L760.0,387.7 L762.8,385.6 L765.4,383.4 L767.9,381.0 L770.3,378.5 L772.6,375.8 L774.7,373.0 L776.7,370.1 L778.6,367.1 L780.5,364.0 L782.3,360.8 L784.0,357.6 L785.7,354.3 L787.4,351.1 L789.1,347.8 L790.9,344.7" fill="none" stroke="#fdfd10" stroke-width="2.4"/><path d="M787.5,336.2 L801.0,351.2" fill="none" stroke="#fdfd10" stroke-width="2.6"/><path d="M927.8,170.7 L876.8,217.4" fill="none" stroke="#fdfd10" stroke-width="3"/><path d="M790.9,344.7 L792.7,341.5 L794.6,338.5 L796.6,335.5 L798.6,332.7 L800.8,329.9 L803.2,327.4 L805.6,324.9 L808.2,322.6 L810.9,320.5 L813.8,318.5 L816.8,316.6 L819.8,314.9 L823.0,313.2 L826.3,311.7 L829.6,310.2 L833.0,308.7 L836.4,307.3 L839.7,305.9 L843.1,304.5 L846.5,303.0 L849.8,301.5 L853.0,299.9 L856.1,298.2 L859.1,296.4 L862.0,294.4 L864.8,292.3 L867.4,290.1 L869.9,287.7 L872.3,285.2 L874.6,282.5 L876.7,279.7 L878.7,276.8 L880.6,273.8 L882.5,270.7 L884.3,267.5 L886.0,264.3 L887.7,261.0 L889.4,257.8 L891.1,254.5 L892.9,251.4" fill="none" stroke="#fdfd10" stroke-width="2.4"/><path d="M889.5,242.9 L903.0,257.9" fill="none" stroke="#fdfd10" stroke-width="2.6"/><path d="M435.6,673.1 L382.6,715.6 L433.6,668.9 Z M435.6,673.1 L384.6,719.8 L382.6,715.6 Z M435.6,673.1 L384.6,719.8 L433.6,668.9 Z M433.6,668.9 L384.6,719.8 L382.6,715.6 Z M433.6,668.9 L380.6,711.4 L431.6,664.8 Z M433.6,668.9 L382.6,715.6 L380.6,711.4 Z M433.6,668.9 L382.6,715.6 L431.6,664.8 Z M431.6,664.8 L382.6,715.6 L380.6,711.4 Z M431.6,664.8 L378.6,707.3 L429.6,660.7 Z M431.6,664.8 L380.6,711.4 L378.6,707.3 Z M431.6,664.8 L380.6,711.4 L429.6,660.7 Z M429.6,660.7 L380.6,711.4 L378.6,707.3 Z M429.6,660.7 L376.6,703.3 L427.6,656.6 Z M429.6,660.7 L378.6,707.3 L376.6,703.3 Z M429.6,660.7 L378.6,707.3 L427.6,656.6 Z M427.6,656.6 L378.6,707.3 L376.6,703.3 Z M427.6,656.6 L374.6,699.3 L425.6,652.7 Z M427.6,656.6 L376.6,703.3 L374.6,699.3 Z M427.6,656.6 L376.6,703.3 L425.6,652.7 Z M425.6,652.7 L376.6,703.3 L374.6,699.3 Z M425.6,652.7 L372.6,695.5 L423.6,648.8 Z M425.6,652.7 L374.6,699.3 L372.6,695.5 Z M425.6,652.7 L374.6,699.3 L423.6,648.8 Z M423.6,648.8 L374.6,699.3 L372.6,695.5 Z M423.6,648.8 L370.7,691.7 L421.7,645.0 Z M423.6,648.8 L372.6,695.5 L370.7,691.7 Z M423.6,648.8 L372.6,695.5 L421.7,645.0 Z M421.7,645.0 L372.6,695.5 L370.7,691.7 Z M421.7,645.0 L368.9,688.0 L419.9,641.3 Z M421.7,645.0 L370.7,691.7 L368.9,688.0 Z M421.7,645.0 L370.7,691.7 L419.9,641.3 Z M419.9,641.3 L370.7,691.7 L368.9,688.0 Z M419.9,641.3 L367.1,684.4 L418.1,637.8 Z M419.9,641.3 L368.9,688.0 L367.1,684.4 Z M419.9,641.3 L368.9,688.0 L418.1,637.8 Z M418.1,637.8 L368.9,688.0 L367.1,684.4 Z M418.1,637.8 L365.3,681.0 L416.3,634.4 Z M418.1,637.8 L367.1,684.4 L365.3,681.0 Z M418.1,637.8 L367.1,684.4 L416.3,634.4 Z M416.3,634.4 L367.1,684.4 L365.3,681.0 Z M416.3,634.4 L363.7,677.7 L414.7,631.1 Z M416.3,634.4 L365.3,681.0 L363.7,677.7 Z M416.3,634.4 L365.3,681.0 L414.7,631.1 Z M414.7,631.1 L365.3,681.0 L363.7,677.7 Z M414.7,631.1 L362.2,674.6 L413.2,628.0 Z M414.7,631.1 L363.7,677.7 L362.2,674.6 Z M414.7,631.1 L363.7,677.7 L413.2,628.0 Z M413.2,628.0 L363.7,677.7 L362.2,674.6 Z M413.2,628.0 L360.8,671.6 L411.8,625.0 Z M413.2,628.0 L362.2,674.6 L360.8,671.6 Z M413.2,628.0 L362.2,674.6 L411.8,625.0 Z M411.8,625.0 L362.2,674.6 L360.8,671.6 Z M411.8,625.0 L359.4,668.8 L410.4,622.2 Z M411.8,625.0 L360.8,671.6 L359.4,668.8 Z M411.8,625.0 L360.8,671.6 L410.4,622.2 Z M410.4,622.2 L360.8,671.6 L359.4,668.8 Z M410.4,622.2 L358.3,666.2 L409.3,619.5 Z M410.4,622.2 L359.4,668.8 L358.3,666.2 Z M410.4,622.2 L359.4,668.8 L409.3,619.5 Z M409.3,619.5 L359.4,668.8 L358.3,666.2 Z M409.3,619.5 L357.2,663.7 L408.2,617.1 Z M409.3,619.5 L358.3,666.2 L357.2,663.7 Z M409.3,619.5 L358.3,666.2 L408.2,617.1 Z M408.2,617.1 L358.3,666.2 L357.2,663.7 Z M408.2,617.1 L356.3,661.4 L407.3,614.8 Z M408.2,617.1 L357.2,663.7 L356.3,661.4 Z M408.2,617.1 L357.2,663.7 L407.3,614.8 Z M407.3,614.8 L357.2,663.7 L356.3,661.4 Z M407.3,614.8 L355.5,659.4 L406.5,612.7 Z M407.3,614.8 L356.3,661.4 L355.5,659.4 Z M407.3,614.8 L356.3,661.4 L406.5,612.7 Z M406.5,612.7 L356.3,661.4 L355.5,659.4 Z M406.5,612.7 L354.9,657.5 L405.9,610.8 Z M406.5,612.7 L355.5,659.4 L354.9,657.5 Z M406.5,612.7 L355.5,659.4 L405.9,610.8 Z M405.9,610.8 L355.5,659.4 L354.9,657.5 Z M405.9,610.8 L354.5,655.8 L405.5,609.1 Z M405.9,610.8 L354.9,657.5 L354.5,655.8 Z M405.9,610.8 L354.9,657.5 L405.5,609.1 Z M405.5,609.1 L354.9,657.5 L354.5,655.8 Z M405.5,609.1 L354.2,654.3 L405.2,607.6 Z M405.5,609.1 L354.5,655.8 L354.2,654.3 Z M405.5,609.1 L354.5,655.8 L405.2,607.6 Z M405.2,607.6 L354.5,655.8 L354.2,654.3 Z M405.2,607.6 L354.1,653.0 L405.1,606.3 Z M405.2,607.6 L354.2,654.3 L354.1,653.0 Z M405.2,607.6 L354.2,654.3 L405.1,606.3 Z M405.1,606.3 L354.2,654.3 L354.1,653.0 Z M405.1,606.3 L354.2,651.9 L405.2,605.3 Z M405.1,606.3 L354.1,653.0 L354.2,651.9 Z M405.1,606.3 L354.1,653.0 L405.2,605.3 Z M405.2,605.3 L354.1,653.0 L354.2,651.9 Z M405.2,605.3 L354.4,651.0 L405.4,604.4 Z M405.2,605.3 L354.2,651.9 L354.4,651.0 Z M405.2,605.3 L354.2,651.9 L405.4,604.4 Z M405.4,604.4 L354.2,651.9 L354.4,651.0 Z M405.4,604.4 L354.9,650.4 L405.9,603.7 Z M405.4,604.4 L354.4,651.0 L354.9,650.4 Z M405.4,604.4 L354.4,651.0 L405.9,603.7 Z M405.9,603.7 L354.4,651.0 L354.9,650.4 Z M405.9,603.7 L406.5,603.2 L355.5,649.9 Z M405.9,603.7 L355.5,649.9 L354.9,650.4 Z M405.9,603.7 L406.5,603.2 L354.9,650.4 Z M406.5,603.2 L355.5,649.9 L354.9,650.4 Z M406.5,603.2 L407.3,603.0 L356.3,649.6 Z M406.5,603.2 L356.3,649.6 L355.5,649.9 Z M406.5,603.2 L407.3,603.0 L355.5,649.9 Z M407.3,603.0 L356.3,649.6 L355.5,649.9 Z M407.3,603.0 L408.3,602.9 L357.3,649.6 Z M407.3,603.0 L357.3,649.6 L356.3,649.6 Z M407.3,603.0 L408.3,602.9 L356.3,649.6 Z M408.3,602.9 L357.3,649.6 L356.3,649.6 Z M408.3,602.9 L409.5,603.1 L358.5,649.7 Z M408.3,602.9 L358.5,649.7 L357.3,649.6 Z M408.3,602.9 L409.5,603.1 L357.3,649.6 Z M409.5,603.1 L358.5,649.7 L357.3,649.6 Z M409.5,603.1 L410.9,603.4 L359.9,650.0 Z M409.5,603.1 L359.9,650.0 L358.5,649.7 Z M409.5,603.1 L410.9,603.4 L358.5,649.7 Z M410.9,603.4 L359.9,650.0 L358.5,649.7 Z M410.9,603.4 L412.5,603.9 L361.5,650.5 Z M410.9,603.4 L361.5,650.5 L359.9,650.0 Z M410.9,603.4 L412.5,603.9 L359.9,650.0 Z M412.5,603.9 L361.5,650.5 L359.9,650.0 Z M412.5,603.9 L414.2,604.6 L363.2,651.2 Z M412.5,603.9 L363.2,651.2 L361.5,650.5 Z M412.5,603.9 L414.2,604.6 L361.5,650.5 Z M414.2,604.6 L363.2,651.2 L361.5,650.5 Z M414.2,604.6 L416.2,605.5 L365.2,652.1 Z M414.2,604.6 L365.2,652.1 L363.2,651.2 Z M414.2,604.6 L416.2,605.5 L363.2,651.2 Z M416.2,605.5 L365.2,652.1 L363.2,651.2 Z M416.2,605.5 L418.3,606.5 L367.3,653.2 Z M416.2,605.5 L367.3,653.2 L365.2,652.1 Z M416.2,605.5 L418.3,606.5 L365.2,652.1 Z M418.3,606.5 L367.3,653.2 L365.2,652.1 Z M418.3,606.5 L420.6,607.7 L369.6,654.4 Z M418.3,606.5 L369.6,654.4 L367.3,653.2 Z M418.3,606.5 L420.6,607.7 L367.3,653.2 Z M420.6,607.7 L369.6,654.4 L367.3,653.2 Z M420.6,607.7 L423.0,609.1 L372.0,655.7 Z M420.6,607.7 L372.0,655.7 L369.6,654.4 Z M420.6,607.7 L423.0,609.1 L369.6,654.4 Z M423.0,609.1 L372.0,655.7 L369.6,654.4 Z M423.0,609.1 L425.6,610.6 L374.6,657.2 Z M423.0,609.1 L374.6,657.2 L372.0,655.7 Z M423.0,609.1 L425.6,610.6 L372.0,655.7 Z M425.6,610.6 L374.6,657.2 L372.0,655.7 Z M425.6,610.6 L428.4,612.2 L377.4,658.8 Z M425.6,610.6 L377.4,658.8 L374.6,657.2 Z M425.6,610.6 L428.4,612.2 L374.6,657.2 Z M428.4,612.2 L377.4,658.8 L374.6,657.2 Z M428.4,612.2 L431.3,614.0 L380.3,660.6 Z M428.4,612.2 L380.3,660.6 L377.4,658.8 Z M428.4,612.2 L431.3,614.0 L377.4,658.8 Z M431.3,614.0 L380.3,660.6 L377.4,658.8 Z M431.3,614.0 L434.4,615.8 L383.4,662.5 Z M431.3,614.0 L383.4,662.5 L380.3,660.6 Z M431.3,614.0 L434.4,615.8 L380.3,660.6 Z M434.4,615.8 L383.4,662.5 L380.3,660.6 Z M434.4,615.8 L437.6,617.8 L386.6,664.5 Z M434.4,615.8 L386.6,664.5 L383.4,662.5 Z M434.4,615.8 L437.6,617.8 L383.4,662.5 Z M437.6,617.8 L386.6,664.5 L383.4,662.5 Z M437.6,617.8 L440.9,619.9 L389.9,666.5 Z M437.6,617.8 L389.9,666.5 L386.6,664.5 Z M437.6,617.8 L440.9,619.9 L386.6,664.5 Z M440.9,619.9 L389.9,666.5 L386.6,664.5 Z M440.9,619.9 L444.4,622.0 L393.4,668.7 Z M440.9,619.9 L393.4,668.7 L389.9,666.5 Z M440.9,619.9 L444.4,622.0 L389.9,666.5 Z M444.4,622.0 L393.4,668.7 L389.9,666.5 Z M444.4,622.0 L447.9,624.2 L396.9,670.9 Z M444.4,622.0 L396.9,670.9 L393.4,668.7 Z M444.4,622.0 L447.9,624.2 L393.4,668.7 Z M447.9,624.2 L396.9,670.9 L393.4,668.7 Z M447.9,624.2 L451.6,626.5 L400.6,673.2 Z M447.9,624.2 L400.6,673.2 L396.9,670.9 Z M447.9,624.2 L451.6,626.5 L396.9,670.9 Z M451.6,626.5 L400.6,673.2 L396.9,670.9 Z M451.6,626.5 L455.3,628.8 L404.3,675.5 Z M451.6,626.5 L404.3,675.5 L400.6,673.2 Z M451.6,626.5 L455.3,628.8 L400.6,673.2 Z M455.3,628.8 L404.3,675.5 L400.6,673.2 Z M455.3,628.8 L459.1,631.2 L408.1,677.8 Z M455.3,628.8 L408.1,677.8 L404.3,675.5 Z M455.3,628.8 L459.1,631.2 L404.3,675.5 Z M459.1,631.2 L408.1,677.8 L404.3,675.5 Z M459.1,631.2 L463.0,633.6 L412.0,680.2 Z M459.1,631.2 L412.0,680.2 L408.1,677.8 Z M459.1,631.2 L463.0,633.6 L408.1,677.8 Z M463.0,633.6 L412.0,680.2 L408.1,677.8 Z M463.0,633.6 L467.0,635.9 L416.0,682.6 Z M463.0,633.6 L416.0,682.6 L412.0,680.2 Z M463.0,633.6 L467.0,635.9 L412.0,680.2 Z M467.0,635.9 L416.0,682.6 L412.0,680.2 Z M467.0,635.9 L470.9,638.3 L419.9,685.0 Z M467.0,635.9 L419.9,685.0 L416.0,682.6 Z M467.0,635.9 L470.9,638.3 L416.0,682.6 Z M470.9,638.3 L419.9,685.0 L416.0,682.6 Z M470.9,638.3 L474.9,640.7 L423.9,687.3 Z M470.9,638.3 L423.9,687.3 L419.9,685.0 Z M470.9,638.3 L474.9,640.7 L419.9,685.0 Z M474.9,640.7 L423.9,687.3 L419.9,685.0 Z M474.9,640.7 L479.0,643.0 L428.0,689.6 Z M474.9,640.7 L428.0,689.6 L423.9,687.3 Z M474.9,640.7 L479.0,643.0 L423.9,687.3 Z M479.0,643.0 L428.0,689.6 L423.9,687.3 Z M479.0,643.0 L483.0,645.2 L432.0,691.9 Z M479.0,643.0 L432.0,691.9 L428.0,689.6 Z M479.0,643.0 L483.0,645.2 L428.0,689.6 Z M483.0,645.2 L432.0,691.9 L428.0,689.6 Z M483.0,645.2 L487.1,647.5 L436.1,694.1 Z M483.0,645.2 L436.1,694.1 L432.0,691.9 Z M483.0,645.2 L487.1,647.5 L432.0,691.9 Z M487.1,647.5 L436.1,694.1 L432.0,691.9 Z M487.1,647.5 L491.1,649.6 L440.1,696.3 Z M487.1,647.5 L440.1,696.3 L436.1,694.1 Z M487.1,647.5 L491.1,649.6 L436.1,694.1 Z M491.1,649.6 L440.1,696.3 L436.1,694.1 Z M491.1,649.6 L495.1,651.7 L444.1,698.3 Z M491.1,649.6 L444.1,698.3 L440.1,696.3 Z M491.1,649.6 L495.1,651.7 L440.1,696.3 Z M495.1,651.7 L444.1,698.3 L440.1,696.3 Z M495.1,651.7 L499.0,653.6 L448.0,700.3 Z M495.1,651.7 L448.0,700.3 L444.1,698.3 Z M495.1,651.7 L499.0,653.6 L444.1,698.3 Z M499.0,653.6 L448.0,700.3 L444.1,698.3 Z M499.0,653.6 L502.9,655.5 L451.9,702.2 Z M499.0,653.6 L451.9,702.2 L448.0,700.3 Z M499.0,653.6 L502.9,655.5 L448.0,700.3 Z M502.9,655.5 L451.9,702.2 L448.0,700.3 Z M502.9,655.5 L506.8,657.3 L455.8,703.9 Z M502.9,655.5 L455.8,703.9 L451.9,702.2 Z M502.9,655.5 L506.8,657.3 L451.9,702.2 Z M506.8,657.3 L455.8,703.9 L451.9,702.2 Z M506.8,657.3 L510.6,658.9 L459.6,705.5 Z M506.8,657.3 L459.6,705.5 L455.8,703.9 Z M506.8,657.3 L510.6,658.9 L455.8,703.9 Z M510.6,658.9 L459.6,705.5 L455.8,703.9 Z M510.6,658.9 L514.3,660.4 L463.3,707.0 Z M510.6,658.9 L463.3,707.0 L459.6,705.5 Z M510.6,658.9 L514.3,660.4 L459.6,705.5 Z M514.3,660.4 L463.3,707.0 L459.6,705.5 Z M514.3,660.4 L517.9,661.7 L466.9,708.4 Z M514.3,660.4 L466.9,708.4 L463.3,707.0 Z M514.3,660.4 L517.9,661.7 L463.3,707.0 Z M517.9,661.7 L466.9,708.4 L463.3,707.0 Z M517.9,661.7 L521.4,662.9 L470.4,709.6 Z M517.9,661.7 L470.4,709.6 L466.9,708.4 Z M517.9,661.7 L521.4,662.9 L466.9,708.4 Z M521.4,662.9 L470.4,709.6 L466.9,708.4 Z M521.4,662.9 L524.7,664.0 L473.7,710.6 Z M521.4,662.9 L473.7,710.6 L470.4,709.6 Z M521.4,662.9 L524.7,664.0 L470.4,709.6 Z M524.7,664.0 L473.7,710.6 L470.4,709.6 Z M524.7,664.0 L528.0,664.8 L477.0,711.5 Z M524.7,664.0 L477.0,711.5 L473.7,710.6 Z M524.7,664.0 L528.0,664.8 L473.7,710.6 Z M528.0,664.8 L477.0,711.5 L473.7,710.6 Z M528.0,664.8 L531.1,665.5 L480.1,712.2 Z M528.0,664.8 L480.1,712.2 L477.0,711.5 Z M528.0,664.8 L531.1,665.5 L477.0,711.5 Z M531.1,665.5 L480.1,712.2 L477.0,711.5 Z M531.1,665.5 L534.1,666.0 L483.1,712.7 Z M531.1,665.5 L483.1,712.7 L480.1,712.2 Z M531.1,665.5 L534.1,666.0 L480.1,712.2 Z M534.1,666.0 L483.1,712.7 L480.1,712.2 Z M534.1,666.0 L537.0,666.3 L486.0,713.0 Z M534.1,666.0 L486.0,713.0 L483.1,712.7 Z M534.1,666.0 L537.0,666.3 L483.1,712.7 Z M537.0,666.3 L486.0,713.0 L483.1,712.7 Z M537.0,666.3 L539.7,666.5 L488.7,713.1 Z M537.0,666.3 L488.7,713.1 L486.0,713.0 Z M537.0,666.3 L539.7,666.5 L486.0,713.0 Z M539.7,666.5 L488.7,713.1 L486.0,713.0 Z M539.7,666.5 L542.2,666.4 L491.2,713.0 Z M539.7,666.5 L491.2,713.0 L488.7,713.1 Z M539.7,666.5 L542.2,666.4 L488.7,713.1 Z M542.2,666.4 L491.2,713.0 L488.7,713.1 Z M542.2,666.4 L544.6,666.1 L493.6,712.8 Z M542.2,666.4 L493.6,712.8 L491.2,713.0 Z M542.2,666.4 L544.6,666.1 L491.2,713.0 Z M544.6,666.1 L493.6,712.8 L491.2,713.0 Z M544.6,666.1 L546.8,665.6 L495.8,712.3 Z M544.6,666.1 L495.8,712.3 L493.6,712.8 Z M544.6,666.1 L546.8,665.6 L493.6,712.8 Z M546.8,665.6 L495.8,712.3 L493.6,712.8 Z M546.8,665.6 L548.8,664.9 L497.8,711.6 Z M546.8,665.6 L497.8,711.6 L495.8,712.3 Z M546.8,665.6 L548.8,664.9 L495.8,712.3 Z M548.8,664.9 L497.8,711.6 L495.8,712.3 Z M548.8,664.9 L550.6,664.1 L499.6,710.7 Z M548.8,664.9 L499.6,710.7 L497.8,711.6 Z M548.8,664.9 L550.6,664.1 L497.8,711.6 Z M550.6,664.1 L499.6,710.7 L497.8,711.6 Z M550.6,664.1 L552.3,663.0 L501.3,709.6 Z M550.6,664.1 L501.3,709.6 L499.6,710.7 Z M550.6,664.1 L552.3,663.0 L499.6,710.7 Z M552.3,663.0 L501.3,709.6 L499.6,710.7 Z M552.3,663.0 L553.8,661.7 L502.8,708.3 Z M552.3,663.0 L502.8,708.3 L501.3,709.6 Z M552.3,663.0 L553.8,661.7 L501.3,709.6 Z M553.8,661.7 L502.8,708.3 L501.3,709.6 Z M553.8,661.7 L504.1,706.8 L555.1,660.2 Z M553.8,661.7 L502.8,708.3 L504.1,706.8 Z M553.8,661.7 L502.8,708.3 L555.1,660.2 Z M555.1,660.2 L502.8,708.3 L504.1,706.8 Z M555.1,660.2 L505.2,705.1 L556.2,658.5 Z M555.1,660.2 L504.1,706.8 L505.2,705.1 Z M555.1,660.2 L504.1,706.8 L556.2,658.5 Z M556.2,658.5 L504.1,706.8 L505.2,705.1 Z M556.2,658.5 L506.1,703.2 L557.1,656.6 Z M556.2,658.5 L505.2,705.1 L506.1,703.2 Z M556.2,658.5 L505.2,705.1 L557.1,656.6 Z M557.1,656.6 L505.2,705.1 L506.1,703.2 Z M557.1,656.6 L506.8,701.1 L557.8,654.5 Z M557.1,656.6 L506.1,703.2 L506.8,701.1 Z M557.1,656.6 L506.1,703.2 L557.8,654.5 Z M557.8,654.5 L506.1,703.2 L506.8,701.1 Z M557.8,654.5 L507.3,698.8 L558.3,652.2 Z M557.8,654.5 L506.8,701.1 L507.3,698.8 Z M557.8,654.5 L506.8,701.1 L558.3,652.2 Z M558.3,652.2 L506.8,701.1 L507.3,698.8 Z M558.3,652.2 L507.7,696.4 L558.7,649.7 Z M558.3,652.2 L507.3,698.8 L507.7,696.4 Z M558.3,652.2 L507.3,698.8 L558.7,649.7 Z M558.7,649.7 L507.3,698.8 L507.7,696.4 Z M558.7,649.7 L507.8,693.7 L558.8,647.1 Z M558.7,649.7 L507.7,696.4 L507.8,693.7 Z M558.7,649.7 L507.7,696.4 L558.8,647.1 Z M558.8,647.1 L507.7,696.4 L507.8,693.7 Z M558.8,647.1 L507.8,690.9 L558.8,644.2 Z M558.8,647.1 L507.8,693.7 L507.8,690.9 Z M558.8,647.1 L507.8,693.7 L558.8,644.2 Z M558.8,644.2 L507.8,693.7 L507.8,690.9 Z M558.8,644.2 L507.6,687.9 L558.6,641.3 Z M558.8,644.2 L507.8,690.9 L507.6,687.9 Z M558.8,644.2 L507.8,690.9 L558.6,641.3 Z M558.6,641.3 L507.8,690.9 L507.6,687.9 Z M558.6,641.3 L507.3,684.8 L558.3,638.1 Z M558.6,641.3 L507.6,687.9 L507.3,684.8 Z M558.6,641.3 L507.6,687.9 L558.3,638.1 Z M558.3,638.1 L507.6,687.9 L507.3,684.8 Z M558.3,638.1 L506.7,681.5 L557.7,634.8 Z M558.3,638.1 L507.3,684.8 L506.7,681.5 Z M558.3,638.1 L507.3,684.8 L557.7,634.8 Z M557.7,634.8 L507.3,684.8 L506.7,681.5 Z M557.7,634.8 L506.0,678.0 L557.0,631.4 Z M557.7,634.8 L506.7,681.5 L506.0,678.0 Z M557.7,634.8 L506.7,681.5 L557.0,631.4 Z M557.0,631.4 L506.7,681.5 L506.0,678.0 Z M557.0,631.4 L505.2,674.5 L556.2,627.8 Z M557.0,631.4 L506.0,678.0 L505.2,674.5 Z M557.0,631.4 L506.0,678.0 L556.2,627.8 Z M556.2,627.8 L506.0,678.0 L505.2,674.5 Z M556.2,627.8 L504.2,670.8 L555.2,624.2 Z M556.2,627.8 L505.2,674.5 L504.2,670.8 Z M556.2,627.8 L505.2,674.5 L555.2,624.2 Z M555.2,624.2 L505.2,674.5 L504.2,670.8 Z M555.2,624.2 L503.1,667.0 L554.1,620.4 Z M555.2,624.2 L504.2,670.8 L503.1,667.0 Z M555.2,624.2 L504.2,670.8 L554.1,620.4 Z M554.1,620.4 L504.2,670.8 L503.1,667.0 Z M554.1,620.4 L501.8,663.1 L552.8,616.5 Z M554.1,620.4 L503.1,667.0 L501.8,663.1 Z M554.1,620.4 L503.1,667.0 L552.8,616.5 Z M552.8,616.5 L503.1,667.0 L501.8,663.1 Z M552.8,616.5 L500.5,659.2 L551.5,612.5 Z M552.8,616.5 L501.8,663.1 L500.5,659.2 Z M552.8,616.5 L501.8,663.1 L551.5,612.5 Z M551.5,612.5 L501.8,663.1 L500.5,659.2 Z M551.5,612.5 L499.0,655.1 L550.0,608.5 Z M551.5,612.5 L500.5,659.2 L499.0,655.1 Z M551.5,612.5 L500.5,659.2 L550.0,608.5 Z M550.0,608.5 L500.5,659.2 L499.0,655.1 Z M550.0,608.5 L497.4,651.0 L548.4,604.4 Z M550.0,608.5 L499.0,655.1 L497.4,651.0 Z M550.0,608.5 L499.0,655.1 L548.4,604.4 Z M548.4,604.4 L499.0,655.1 L497.4,651.0 Z M548.4,604.4 L495.7,646.9 L546.7,600.2 Z M548.4,604.4 L497.4,651.0 L495.7,646.9 Z M548.4,604.4 L497.4,651.0 L546.7,600.2 Z M546.7,600.2 L497.4,651.0 L495.7,646.9 Z M546.7,600.2 L494.0,642.7 L545.0,596.0 Z M546.7,600.2 L495.7,646.9 L494.0,642.7 Z M546.7,600.2 L495.7,646.9 L545.0,596.0 Z M545.0,596.0 L495.7,646.9 L494.0,642.7 Z M545.0,596.0 L492.1,638.5 L543.1,591.8 Z M545.0,596.0 L494.0,642.7 L492.1,638.5 Z M545.0,596.0 L494.0,642.7 L543.1,591.8 Z M543.1,591.8 L494.0,642.7 L492.1,638.5 Z M543.1,591.8 L490.2,634.2 L541.2,587.6 Z M543.1,591.8 L492.1,638.5 L490.2,634.2 Z M543.1,591.8 L492.1,638.5 L541.2,587.6 Z M541.2,587.6 L492.1,638.5 L490.2,634.2 Z M541.2,587.6 L488.3,630.0 L539.3,583.4 Z M541.2,587.6 L490.2,634.2 L488.3,630.0 Z M541.2,587.6 L490.2,634.2 L539.3,583.4 Z M539.3,583.4 L490.2,634.2 L488.3,630.0 Z M539.3,583.4 L486.3,625.8 L537.3,579.1 Z M539.3,583.4 L488.3,630.0 L486.3,625.8 Z M539.3,583.4 L488.3,630.0 L537.3,579.1 Z M537.3,579.1 L488.3,630.0 L486.3,625.8 Z M537.3,579.1 L484.3,621.6 L535.3,575.0 Z M537.3,579.1 L486.3,625.8 L484.3,621.6 Z M537.3,579.1 L486.3,625.8 L535.3,575.0 Z M535.3,575.0 L486.3,625.8 L484.3,621.6 Z M535.3,575.0 L482.3,617.5 L533.3,570.8 Z M535.3,575.0 L484.3,621.6 L482.3,617.5 Z M535.3,575.0 L484.3,621.6 L533.3,570.8 Z M533.3,570.8 L484.3,621.6 L482.3,617.5 Z M533.3,570.8 L480.3,613.4 L531.3,566.7 Z M533.3,570.8 L482.3,617.5 L480.3,613.4 Z M533.3,570.8 L482.3,617.5 L531.3,566.7 Z M531.3,566.7 L482.3,617.5 L480.3,613.4 Z M531.3,566.7 L478.3,609.4 L529.3,562.7 Z M531.3,566.7 L480.3,613.4 L478.3,609.4 Z M531.3,566.7 L480.3,613.4 L529.3,562.7 Z M529.3,562.7 L480.3,613.4 L478.3,609.4 Z M529.3,562.7 L476.3,605.4 L527.3,558.7 Z M529.3,562.7 L478.3,609.4 L476.3,605.4 Z M529.3,562.7 L478.3,609.4 L527.3,558.7 Z M527.3,558.7 L478.3,609.4 L476.3,605.4 Z M527.3,558.7 L474.3,601.5 L525.3,554.9 Z M527.3,558.7 L476.3,605.4 L474.3,601.5 Z M527.3,558.7 L476.3,605.4 L525.3,554.9 Z M525.3,554.9 L476.3,605.4 L474.3,601.5 Z M525.3,554.9 L472.4,597.8 L523.4,551.1 Z M525.3,554.9 L474.3,601.5 L472.4,597.8 Z M525.3,554.9 L474.3,601.5 L523.4,551.1 Z M523.4,551.1 L474.3,601.5 L472.4,597.8 Z M523.4,551.1 L470.6,594.1 L521.6,547.5 Z M523.4,551.1 L472.4,597.8 L470.6,594.1 Z M523.4,551.1 L472.4,597.8 L521.6,547.5 Z M521.6,547.5 L472.4,597.8 L470.6,594.1 Z M521.6,547.5 L468.8,590.6 L519.8,543.9 Z M521.6,547.5 L470.6,594.1 L468.8,590.6 Z M521.6,547.5 L470.6,594.1 L519.8,543.9 Z M519.8,543.9 L470.6,594.1 L468.8,590.6 Z" fill="#1f96ee" stroke="#1f96ee" stroke-width="1.2" stroke-linejoin="round"/><path d="M467.6,636.3 L481.4,625.5 L486,624 L494,636 L503,662 L484,650 Z" fill="#1f96ee" stroke="#1f96ee" stroke-width="1"/><path d="M353.4,652.9 L354.8,662.8 L359.7,674.6 L367.6,690.3 L377.4,706.1 L384.3,717.9 L387.3,721.9 L420,691 L434.8,698.3 L449.5,705.7 L464.3,710.8 L479.1,714.2 L493.9,715.3 L500,713.5 L503.5,710.5 L551,668 L556,661 L540,650 L480,690 L440,680 L400,690 L370,670 L360,655 Z" fill="#1f96ee" stroke="#1f96ee" stroke-width="1" stroke-linejoin="round"/><path d="M435.6,673.1 L433.3,668.3 L431.0,663.5 L428.6,658.8 L426.3,654.1 L424.1,649.6 L421.8,645.2 L419.7,641.0 L417.6,636.9 L415.6,633.0 L413.8,629.3 L412.1,625.7 L410.6,622.5 L409.2,619.4 L408.0,616.6 L407.0,614.0 L406.2,611.7 L405.6,609.6 L405.2,607.9 L405.1,606.3 L405.2,605.1 L405.6,604.2 L406.2,603.5 L407.0,603.1 L408.1,602.9 L409.5,603.0 L411.1,603.4 L412.9,604.1 L415.0,604.9 L417.4,606.0 L419.9,607.4 L422.8,608.9 L425.8,610.6 L429.0,612.6 L432.5,614.6 L436.1,616.9 L439.9,619.2 L443.8,621.7 L447.9,624.2 L452.2,626.9 L456.5,629.6 L461.0,632.3 L465.5,635.1 L470.1,637.8 L474.7,640.5 L479.4,643.2 L484.1,645.8 L488.8,648.4 L493.4,650.8 L498.0,653.1 L502.5,655.3 L507.0,657.4 L511.4,659.2 L515.6,660.9 L519.7,662.4 L523.7,663.7 L527.5,664.7 L531.1,665.5 L534.6,666.1 L537.9,666.4 L540.9,666.4 L543.7,666.2 L546.3,665.7 L548.7,665.0 L550.8,664.0 L552.7,662.6 L554.3,661.1 L555.7,659.2 L556.8,657.1 L557.7,654.7 L558.3,652.1 L558.7,649.2 L558.8,646.0 L558.7,642.7 L558.4,639.1 L557.8,635.3 L557.0,631.4 L556.1,627.3 L554.9,623.0 L553.5,618.5 L552.0,614.0 L550.3,609.3 L548.5,604.6 L546.5,599.8 L544.5,594.9 L542.3,590.0 L540.1,585.1 L537.8,580.3 L535.5,575.4 L533.2,570.6 L530.9,565.9 L528.5,561.2 L526.3,556.7 L524.0,552.3 L521.9,548.0 L519.8,543.9 M384.6,719.8 L382.3,714.9 L380.0,710.1 L377.6,705.4 L375.3,700.8 L373.1,696.3 L370.8,691.9 L368.7,687.6 L366.6,683.5 L364.6,679.6 L362.8,675.9 L361.1,672.4 L359.6,669.1 L358.2,666.0 L357.0,663.2 L356.0,660.7 L355.2,658.3 L354.6,656.3 L354.2,654.5 L354.1,653.0 L354.2,651.8 L354.6,650.8 L355.2,650.1 L356.0,649.7 L357.1,649.6 L358.5,649.7 L360.1,650.1 L361.9,650.7 L364.0,651.6 L366.4,652.7 L368.9,654.0 L371.8,655.6 L374.8,657.3 L378.0,659.2 L381.5,661.3 L385.1,663.5 L388.9,665.9 L392.8,668.3 L396.9,670.9 L401.2,673.5 L405.5,676.2 L410.0,679.0 L414.5,681.7 L419.1,684.5 L423.7,687.2 L428.4,689.9 L433.1,692.5 L437.8,695.0 L442.4,697.5 L447.0,699.8 L451.5,702.0 L456.0,704.0 L460.4,705.9 L464.6,707.6 L468.7,709.0 L472.7,710.3 L476.5,711.4 L480.1,712.2 L483.6,712.7 L486.9,713.0 L489.9,713.1 L492.7,712.9 L495.3,712.4 L497.7,711.6 L499.8,710.6 L501.7,709.3 L503.3,707.7 L504.7,705.9 L505.8,703.7 L506.7,701.3 L507.3,698.7 L507.7,695.8 L507.8,692.7 L507.7,689.3 L507.4,685.8 L506.8,682.0 L506.0,678.0 L505.1,673.9 L503.9,669.6 L502.5,665.2 L501.0,660.6 L499.3,656.0 L497.5,651.2 L495.5,646.4 L493.5,641.6 L491.3,636.7 L489.1,631.8 L486.8,626.9 L484.5,622.1 L482.2,617.3 L479.9,612.5 L477.5,607.9 L475.3,603.4 L473.0,599.0 L470.9,594.7 L468.8,590.6 M519.8,543.9 L468.8,590.6 M435.6,673.1 L384.6,719.8 M406.0,603.6 L355.0,650.2" fill="none" stroke="#4a97e6" stroke-width="1.3" stroke-linejoin="round"/><path d="M353.4,652.9 L356.5,649.6 L357.7,649.6 L359.1,649.8 L360.8,650.3 L362.7,651.0 L364.9,652.0 L367.3,653.2 L370.0,654.6 L372.8,656.2 L375.9,657.9 L379.2,659.9 L382.7,662.0 L386.3,664.3 L390.1,666.6 L394.1,669.1 L398.2,671.7 L402.4,674.3 L406.8,677.0 L411.2,679.7 L415.7,682.4 L420.3,685.2 M356.5,655.5 L359.3,653.1 L360.8,653.4 L362.6,653.9 L364.7,654.7 L367.0,655.7 L369.5,657.0 L372.3,658.5 L375.3,660.2 L378.5,662.1 L382.0,664.2 L385.6,666.4 L389.4,668.8 L393.4,671.3 L397.6,673.9 L401.9,676.5 L406.3,679.3 L410.8,682.1 L415.4,684.9 M406.0,604.5 L408.0,615.0 L412.5,630.0 L414.0,636.0 L366.0,678.5 L361.5,676.0 M366.0,678.5 L372.0,683.0 M417.1,683.3 L421.7,686.0 L426.3,688.7 L431.0,691.3 L435.7,693.9 L440.3,696.4 L444.9,698.8 L449.5,701.0 L454.0,703.1 L458.4,705.0 L462.7,706.8 L466.8,708.4 L470.9,709.7 L474.8,710.9 L478.5,711.8 L482.0,712.5 L485.3,712.9 L488.5,713.1 L491.4,713.0 L494.1,712.7 L496.6,712.0 L498.8,711.1 L500.8,710.0 L502.6,708.5 L504.1,706.8 L505.3,704.8 M468.1,636.6 L472.9,639.4 L477.7,642.2 L482.5,645.0 L487.3,647.6 L492.1,650.2 L496.9,652.6 L501.6,654.9 L506.2,657.0 L510.8,659.0 L515.2,660.7 L519.4,662.3 L523.5,663.6 L527.5,664.7 L531.2,665.5 L534.8,666.1 L538.1,666.4 L541.3,666.4 L544.2,666.2 M473.0,643.4 L477.9,646.2 L482.9,649.0 L487.8,651.7 L492.7,654.2 L497.5,656.6 L502.3,658.9 L507.0,661.0 L511.5,662.9 L515.9,664.6 L520.2,666.0 L524.3,667.3 L528.2,668.2 L532.0,668.9 L535.5,669.3 L538.7,669.5 M389.0,719.5 L425.7,688.4 L468.0,652.0 L481.4,640.0 M466.6,588.0 L475.0,612.0 L487.0,640.0 L497.0,668.0 L502.0,690.0 L503.0,706.0 M470.0,637.0 L481.4,625.5 L490.0,618.0 M493.2,712.8 L495.7,712.3 L498.0,711.5 L500.1,710.4 L501.9,709.1 L503.5,707.5 L504.8,705.6 L505.9,703.5 L506.8,701.1 L507.4,698.5 L507.7,695.6 L507.8,692.5 L507.7,689.2 L507.4,685.6 L506.8,681.9 L506.0,677.9 L505.0,673.8 L503.9,669.6 L502.5,665.2 L501.0,660.7" fill="none" stroke="#7fc0f4" stroke-width="1.1" opacity=".9"/><path d="M457.0,557.0 L457.8,556.5 L458.8,556.3 L460.1,556.3 L461.6,556.7 L463.4,557.2 L465.4,558.0 L467.7,559.1 L470.2,560.3 L472.9,561.8 L475.9,563.5 L479.0,565.3 L482.4,567.3 L485.9,569.5 L489.6,571.8 L493.5,574.2 L497.5,576.7 L501.7,579.3 L506.0,582.0 L510.4,584.7 L514.9,587.4 L519.4,590.2 L524.0,592.9 L528.6,595.6 L533.3,598.2 L537.9,600.7 L542.5,603.2 L547.1,605.6 L551.7,607.8 L556.1,609.9 L560.5,611.8" fill="none" stroke="#f3f71c" stroke-width="3"/><path d="M484.9,624.6 L486.7,621.4 L488.6,618.4 L490.6,615.4 L492.6,612.6 L494.8,609.8 L497.2,607.3 L499.6,604.8 L502.2,602.5 L504.9,600.4 L507.8,598.4 L510.8,596.5 L513.8,594.8 L517.0,593.1 L520.3,591.6 L523.6,590.1 L527.0,588.6 L530.4,587.2 L533.7,585.8 L537.1,584.4 L540.5,582.9 L543.8,581.4" fill="none" stroke="#f3f71c" stroke-width="2.6"/><path d="M490.6,629.5 L544.6,580.5 M483.6,621.5 L538.6,571.5 M483.6,621.5 L490.6,629.5" fill="none" stroke="#c4f27a" stroke-width="1"/><path d="M519.8,543.9 L530.8,533.4" stroke="#8a8a8a" stroke-width="2.2"/><path d="M537.3,526.9 L526.3,532.4 L532.8,538.4 Z" fill="#9a9a9a"/><path d="M386.5,721.5 L405,704.3" stroke="#1a2aa8" stroke-width="1"/><path d="M410,699.3 L402.2,701.8 L406.8,706.8 Z" fill="#1a2aa8"/><path d="M384,719.5 L389.5,725 M384.5,724.5 L389,720" stroke="#222" stroke-width=".8"/><path d="M283.3,717.6 L274.8,705.6" stroke="#f29c8a" stroke-width="3.6"/><path d="M275.6,706.8 L273.2,703.4" stroke="#d8705e" stroke-width="2"/><path d="M284,718.9 L299.8,704.4" stroke="#48e060" stroke-width="4.6"/><path d="M284.8,717.6 L299.2,704.4" stroke="#8af29c" stroke-width="1.4"/><path d="M305.4,699 L296.6,701.4 L302.6,708 Z" fill="#2ccc48"/><path d="M284.4,720 L297.6,731.4" stroke="#17178c" stroke-width="4.6"/><path d="M301.6,734.4 L296,733.6 L299.8,729.8 Z" fill="#17178c"/><text x="270.6" y="699.2" font-size="7.5" fill="#e8808e">X</text><text x="308" y="694.8" font-size="8" fill="#8fe2a6">Y</text><text x="303.2" y="738.2" font-size="8.5" font-weight="700" fill="#2a2a9a">Z</text></svg>
<div style="left:290px;top:344px;width:182px;height:76px;background:#f4f4f9;border:1px solid #111"></div>
<div style="left:350px;top:369px;width:122px;height:51px;background:#fff;border:1px solid #111"></div>
<span style="left:354.3px;top:351.9px;font-size:11px;line-height:11px;font-weight:400;color:#111;letter-spacing:0.19px">Direction 1</span>
<span style="left:297.5px;top:376.9px;font-size:11px;line-height:11px;font-weight:400;color:#111;letter-spacing:0.09px">Spacing:</span>
<span style="left:297.5px;top:401.8px;font-size:11px;line-height:11px;font-weight:400;color:#111;letter-spacing:0.04px">Instances:</span>
<span style="left:354.5px;top:376.9px;font-size:11px;line-height:11px;font-weight:400;color:#111;letter-spacing:-0.19px">200.00000000mm</span>
<span style="left:354.5px;top:401.8px;font-size:11px;line-height:11px;font-weight:400;color:#111;letter-spacing:-0.62px">5</span>
<div style="left:454px;top:374.5px;width:14px;height:8.5px;background:#ececec;border:1px solid #b4b4b4"></div>
<div style="left:454px;top:383.0px;width:14px;height:8.5px;background:#ececec;border:1px solid #b4b4b4"></div>
<svg style="left:458px;top:376.7px;" width="6" height="4" viewBox="0 0 6 4"><path d="M0,4 L3,0.5 L6,4 Z" fill="#111"/></svg>
<svg style="left:458px;top:385.2px;" width="6" height="4" viewBox="0 0 6 4"><path d="M0,0 L6,0 L3,3.5 Z" fill="#111"/></svg>
<div style="left:454px;top:399.5px;width:14px;height:8.5px;background:#ececec;border:1px solid #b4b4b4"></div>
<div style="left:454px;top:408.0px;width:14px;height:8.5px;background:#ececec;border:1px solid #b4b4b4"></div>
<svg style="left:458px;top:401.7px;" width="6" height="4" viewBox="0 0 6 4"><path d="M0,4 L3,0.5 L6,4 Z" fill="#111"/></svg>
<svg style="left:458px;top:410.2px;" width="6" height="4" viewBox="0 0 6 4"><path d="M0,0 L6,0 L3,3.5 Z" fill="#111"/></svg>
<svg style="left:456.5px;top:425.5px;" width="11" height="7" viewBox="0 0 11 7"><path d="M1,6 L5.5,1 L10,6" fill="none" stroke="#555" stroke-width="1.8"/></svg>
<svg style="left:0px;top:0px;" width="1267" height="812" viewBox="0 0 1267 812"><path d="M473.6,384.8 L494.2,560" stroke="#222" stroke-width="1" fill="none"/><circle cx="472.6" cy="381.6" r="2.8" fill="#fff" stroke="#111" stroke-width="1"/><path d="M470.3,381.6 H474.9" stroke="#111" stroke-width=".9"/><circle cx="494.2" cy="563" r="2.6" fill="none" stroke="#111" stroke-width="1"/><path d="M492,563 H496.4" stroke="#111" stroke-width=".9"/></svg>
<svg style="left:570px;top:25px;" width="108" height="108" viewBox="0 0 108 108"><circle cx="53.5" cy="53.3" r="48.4" fill="none" stroke="#e10c1d" stroke-width="3.9"/></svg>
<div style="left:0px;top:0px;width:1267px;height:1px;background:#111"></div>
<div style="left:0px;top:0px;width:1px;height:812px;background:#333"></div>
<div style="left:1266px;top:0px;width:1px;height:812px;background:#111"></div>
<div style="left:0px;top:811px;width:1267px;height:1px;background:#111"></div>
</div></body></html>
